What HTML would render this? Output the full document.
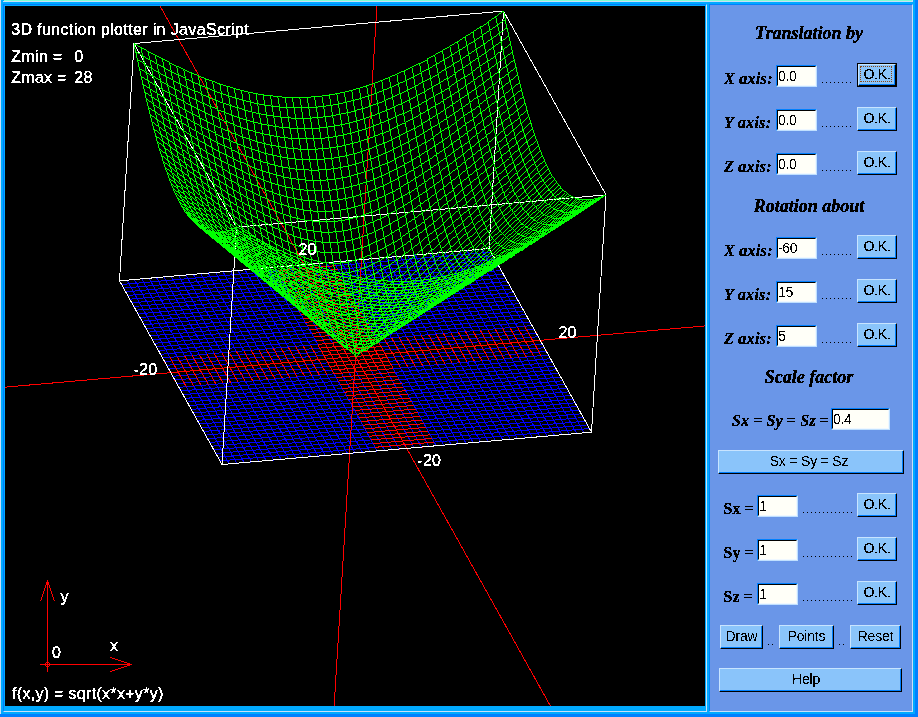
<!DOCTYPE html>
<html><head><meta charset="utf-8">
<style>
*{margin:0;padding:0;box-sizing:border-box}
html,body{width:918px;height:717px;overflow:hidden;background:#00aaff;position:relative}
.a{position:absolute}
.t{position:absolute;white-space:nowrap;line-height:1}
.sans{font-family:"Liberation Sans",sans-serif}
.serif{font-family:"Liberation Serif",serif}
.cv{left:5px;top:6px;width:700px;height:700px;background:#000;overflow:hidden}
.cv svg{position:absolute;left:0;top:0}
.w{color:#fff;font-size:16px;letter-spacing:0.3px;filter:url(#thr);-webkit-text-stroke:0.25px #fff}
.hd{filter:url(#thr);-webkit-text-stroke:0.35px #000;font:bold italic 18px "Liberation Serif",serif;color:#000;left:710px;width:202px;text-align:center}
.lb{filter:url(#thr);-webkit-text-stroke:0.3px #000;font:bold italic 16px "Liberation Serif",serif;color:#000;letter-spacing:0.3px}
.lb2{filter:url(#thr);-webkit-text-stroke:0.3px #000;font:bold 16px "Liberation Serif",serif;color:#000}
.dots{font:16px "Liberation Serif",serif;color:#000}
.inp{position:absolute;height:22px;background:#fffff8;border-top:1px solid #0080ff;border-left:1px solid #0080ff;border-right:1px solid #c0e0ff;border-bottom:1px solid #c0e0ff}
.inp:before{content:"";position:absolute;left:0;top:0;right:0;bottom:0;border-top:1px solid #000;border-left:1px solid #000;border-right:1px solid #f0f8ff;border-bottom:1px solid #f0f8ff}
.inp span{filter:url(#thr);position:absolute;left:1px;top:3px;font:14px "Liberation Sans",sans-serif;letter-spacing:-0.4px;color:#000;line-height:14px}
.btn{position:absolute;height:24px;background:#8ac4fa;border-top:1px solid #c8e4ff;border-left:1px solid #c8e4ff;border-right:1px solid #000;border-bottom:1px solid #000;font:14px "Liberation Sans",sans-serif;letter-spacing:-0.2px;color:#000;text-align:center;line-height:21px}
.btn span{filter:url(#thr);display:inline-block}
.btn:before{content:"";position:absolute;left:0;top:0;right:0;bottom:0;border-right:1px solid #0080ff;border-bottom:1px solid #0080ff}
</style></head><body>
<svg width="0" height="0" style="position:absolute"><filter id="thr" x="0" y="0" width="100%" height="100%"><feComponentTransfer><feFuncA type="discrete" tableValues="0 0 1 1"/></feComponentTransfer></filter><filter id="thr2" x="0" y="0" width="100%" height="100%"><feComponentTransfer><feFuncA type="discrete" tableValues="0 0 0 1"/></feComponentTransfer></filter></svg>
<!-- outer frame -->
<div class="a" style="left:0;top:0;width:1px;height:714px;background:#c8e0f8"></div>
<div class="a" style="left:0;top:714px;width:918px;height:3px;background:#0080ff"></div>
<div class="a" style="left:915px;top:0;width:3px;height:717px;background:#0080ff"></div>
<div class="a" style="left:4px;top:0;width:908px;height:1px;background:#7fffd4"></div>
<div class="a" style="left:3px;top:1px;width:910px;height:1px;background:#c8e0f8"></div>
<div class="a" style="left:912px;top:0;width:1px;height:2px;background:#c8e0f8"></div>
<div class="a" style="left:3px;top:4px;width:704px;height:708px;border-top:1px solid #0080ff;border-left:1px solid #0080ff;border-right:1px solid #c8e0f8;border-bottom:1px solid #c8e0f8"></div>
<div class="a" style="left:709px;top:4px;width:204px;height:708px;background:#6a96e8;border-top:1px solid #0080ff;border-left:1px solid #0080ff;border-right:1px solid #c8e0f8;border-bottom:1px solid #c8e0f8"></div>
<div class="a cv"><svg width="700" height="700" viewBox="0 0 700 700" fill="none" stroke-width="1" shape-rendering="crispEdges"><path stroke="#0000ff" stroke-width="1.000" d="M217.0,458.5L173.9,381.4M157.5,352.0L114.5,274.8M217.0,458.5L372.2,445.0M431.3,439.8L586.5,426.2M224.4,457.9L181.3,380.7M164.9,351.3L121.9,274.1M214.9,454.9L370.1,441.3M429.2,436.1L584.4,422.5M231.8,457.3L188.7,380.1M172.3,350.7L129.3,273.5M212.9,451.2L368.1,437.6M427.2,432.4L582.4,418.9M239.2,456.6L196.1,379.4M179.7,350.0L136.7,272.8M210.8,447.5L366.0,433.9M425.2,428.8L580.3,415.2M246.5,456.0L203.5,378.8M187.1,349.4L144.1,272.2M208.8,443.8L364.0,430.3M423.1,425.1L578.3,411.5M253.9,455.3L210.9,378.1M194.5,348.7L151.5,271.5M206.7,440.2L361.9,426.6M421.1,421.4L576.2,407.8M261.3,454.7L218.3,377.5M201.9,348.1L158.8,270.9M204.7,436.5L359.9,422.9M419.0,417.7L574.2,404.2M268.7,454.0L225.7,376.8M209.3,347.4L166.2,270.3M202.6,432.8L357.8,419.2M417.0,414.1L572.1,400.5M276.1,453.4L233.1,376.2M216.7,346.8L173.6,269.6M200.6,429.1L355.8,415.6M414.9,410.4L570.1,396.8M283.5,452.7L240.5,375.5M224.1,346.1L181.0,269.0M198.5,425.5L353.7,411.9M412.9,406.7L568.0,393.1M290.9,452.1L247.8,374.9M231.5,345.5L188.4,268.3M196.5,421.8L351.7,408.2M410.8,403.0L566.0,389.5M298.3,451.4L255.2,374.3M238.8,344.9L195.8,267.7M194.4,418.1L349.6,404.5M408.8,399.4L563.9,385.8M305.7,450.8L262.6,373.6M246.2,344.2L203.2,267.0M192.4,414.4L347.6,400.9M406.7,395.7L561.9,382.1M313.1,450.1L270.0,373.0M253.6,343.6L210.6,266.4M190.3,410.8L345.5,397.2M404.7,392.0L559.8,378.4M320.4,449.5L277.4,372.3M261.0,342.9L218.0,265.7M188.3,407.1L343.5,393.5M402.6,388.3L557.8,374.8M327.8,448.8L284.8,371.7M268.4,342.3L225.4,265.1M186.2,403.4L341.4,389.8M400.6,384.7L555.7,371.1M335.2,448.2L292.2,371.0M275.8,341.6L232.8,264.4M184.2,399.7L339.4,386.2M398.5,381.0L553.7,367.4M342.6,447.6L299.6,370.4M283.2,341.0L240.1,263.8M182.1,396.1L337.3,382.5M396.5,377.3L551.6,363.7M350.0,446.9L307.0,369.7M290.6,340.3L247.5,263.1M180.1,392.4L335.3,378.8M394.4,373.6L549.6,360.1M357.4,446.3L314.4,369.1M298.0,339.7L254.9,262.5M178.0,388.7L333.2,375.1M392.4,370.0L547.5,356.4M364.8,445.6L321.7,368.4M305.4,339.0L262.3,261.8M176.0,385.0L331.2,371.5M390.3,366.3L545.5,352.7M372.2,445.0L329.1,367.8M312.7,338.4L269.7,261.2M173.9,381.4L329.1,367.8M388.3,362.6L543.5,349.0M379.6,444.3L336.5,367.1M320.1,337.7L277.1,260.6M171.9,377.7L327.1,364.1M386.2,358.9L541.4,345.4M387.0,443.7L343.9,366.5M327.5,337.1L284.5,259.9M169.8,374.0L325.0,360.4M384.2,355.3L539.4,341.7M394.3,443.0L351.3,365.8M334.9,336.4L291.9,259.3M167.8,370.3L323.0,356.8M382.1,351.6L537.3,338.0M401.7,442.4L358.7,365.2M342.3,335.8L299.3,258.6M165.7,366.7L320.9,353.1M380.1,347.9L535.3,334.3M409.1,441.7L366.1,364.6M349.7,335.2L306.7,258.0M163.7,363.0L318.9,349.4M378.0,344.2L533.2,330.7M416.5,441.1L373.5,363.9M357.1,334.5L314.0,257.3M161.6,359.3L316.8,345.7M376.0,340.6L531.2,327.0M423.9,440.4L380.9,363.3M364.5,333.9L321.4,256.7M159.6,355.6L314.8,342.1M373.9,336.9L529.1,323.3M431.3,439.8L388.3,362.6M371.9,333.2L328.8,256.0M157.5,352.0L312.7,338.4M371.9,333.2L527.1,319.6M438.7,439.2L395.6,362.0M379.3,332.6L336.2,255.4M155.5,348.3L310.7,334.7M369.8,329.5L525.0,316.0M446.1,438.5L403.0,361.3M386.6,331.9L343.6,254.7M153.5,344.6L308.6,331.0M367.8,325.9L523.0,312.3M453.5,437.9L410.4,360.7M394.0,331.3L351.0,254.1M151.4,340.9L306.6,327.4M365.7,322.2L520.9,308.6M460.9,437.2L417.8,360.0M401.4,330.6L358.4,253.4M149.4,337.3L304.5,323.7M363.7,318.5L518.9,304.9M468.2,436.6L425.2,359.4M408.8,330.0L365.8,252.8M147.3,333.6L302.5,320.0M361.6,314.8L516.8,301.3M475.6,435.9L432.6,358.7M416.2,329.3L373.2,252.2M145.3,329.9L300.4,316.3M359.6,311.2L514.8,297.6M483.0,435.3L440.0,358.1M423.6,328.7L380.6,251.5M143.2,326.2L298.4,312.7M357.5,307.5L512.7,293.9M490.4,434.6L447.4,357.4M431.0,328.0L387.9,250.9M141.2,322.6L296.3,309.0M355.5,303.8L510.7,290.2M497.8,434.0L454.8,356.8M438.4,327.4L395.3,250.2M139.1,318.9L294.3,305.3M353.4,300.1L508.6,286.6M505.2,433.3L462.2,356.1M445.8,326.7L402.7,249.6M137.1,315.2L292.2,301.6M351.4,296.5L506.6,282.9M512.6,432.7L469.5,355.5M453.2,326.1L410.1,248.9M135.0,311.5L290.2,298.0M349.3,292.8L504.5,279.2M520.0,432.0L476.9,354.9M460.5,325.5L417.5,248.3M133.0,307.9L288.1,294.3M347.3,289.1L502.5,275.5M527.4,431.4L484.3,354.2M467.9,324.8L424.9,247.6M130.9,304.2L286.1,290.6M345.2,285.4L500.4,271.9M534.8,430.7L491.7,353.6M475.3,324.2L432.3,247.0M128.9,300.5L284.0,286.9M343.2,281.8L498.4,268.2M542.2,430.1L499.1,352.9M482.7,323.5L439.7,246.3M126.8,296.8L282.0,283.3M341.1,278.1L496.3,264.5M549.5,429.5L506.5,352.3M490.1,322.9L447.1,245.7M124.8,293.2L279.9,279.6M339.1,274.4L494.3,260.8M556.9,428.8L513.9,351.6M497.5,322.2L454.5,245.0M122.7,289.5L277.9,275.9M337.0,270.7L492.2,257.2M564.3,428.2L521.3,351.0M504.9,321.6L461.8,244.4M120.7,285.8L275.8,272.2M335.0,267.1L490.2,253.5M571.7,427.5L528.7,350.3M512.3,320.9L469.2,243.7M118.6,282.1L273.8,268.6M332.9,263.4L488.1,249.8M579.1,426.9L536.1,349.7M519.7,320.3L476.6,243.1M116.6,278.5L271.8,264.9M330.9,259.7L486.1,246.1M586.5,426.2L543.5,349.0M527.1,319.6L484.0,242.5M114.5,274.8L269.7,261.2M328.8,256.0L484.0,242.5"/><path stroke="#ff0000" stroke-width="1.000" d="M173.9,381.4L157.5,352.0M372.2,445.0L431.3,439.8M181.3,380.7L164.9,351.3M370.1,441.3L429.2,436.1M188.7,380.1L172.3,350.7M368.1,437.6L427.2,432.4M196.1,379.4L179.7,350.0M366.0,433.9L425.2,428.8M203.5,378.8L187.1,349.4M364.0,430.3L423.1,425.1M210.9,378.1L194.5,348.7M361.9,426.6L421.1,421.4M218.3,377.5L201.9,348.1M359.9,422.9L419.0,417.7M225.7,376.8L209.3,347.4M357.8,419.2L417.0,414.1M233.1,376.2L216.7,346.8M355.8,415.6L414.9,410.4M240.5,375.5L224.1,346.1M353.7,411.9L412.9,406.7M247.8,374.9L231.5,345.5M351.7,408.2L410.8,403.0M255.2,374.3L238.8,344.9M349.6,404.5L408.8,399.4M262.6,373.6L246.2,344.2M347.6,400.9L406.7,395.7M270.0,373.0L253.6,343.6M345.5,397.2L404.7,392.0M277.4,372.3L261.0,342.9M343.5,393.5L402.6,388.3M284.8,371.7L268.4,342.3M341.4,389.8L400.6,384.7M292.2,371.0L275.8,341.6M339.4,386.2L398.5,381.0M299.6,370.4L283.2,341.0M337.3,382.5L396.5,377.3M307.0,369.7L290.6,340.3M335.3,378.8L394.4,373.6M314.4,369.1L298.0,339.7M333.2,375.1L392.4,370.0M321.7,368.4L305.4,339.0M331.2,371.5L390.3,366.3M329.1,367.8L312.7,338.4M329.1,367.8L388.3,362.6M336.5,367.1L320.1,337.7M327.1,364.1L386.2,358.9M343.9,366.5L327.5,337.1M325.0,360.4L384.2,355.3M351.3,365.8L334.9,336.4M323.0,356.8L382.1,351.6M358.7,365.2L342.3,335.8M320.9,353.1L380.1,347.9M366.1,364.6L349.7,335.2M318.9,349.4L378.0,344.2M373.5,363.9L357.1,334.5M316.8,345.7L376.0,340.6M380.9,363.3L364.5,333.9M314.8,342.1L373.9,336.9M388.3,362.6L371.9,333.2M312.7,338.4L371.9,333.2M395.6,362.0L379.3,332.6M310.7,334.7L369.8,329.5M403.0,361.3L386.6,331.9M308.6,331.0L367.8,325.9M410.4,360.7L394.0,331.3M306.6,327.4L365.7,322.2M417.8,360.0L401.4,330.6M304.5,323.7L363.7,318.5M425.2,359.4L408.8,330.0M302.5,320.0L361.6,314.8M432.6,358.7L416.2,329.3M300.4,316.3L359.6,311.2M440.0,358.1L423.6,328.7M298.4,312.7L357.5,307.5M447.4,357.4L431.0,328.0M296.3,309.0L355.5,303.8M454.8,356.8L438.4,327.4M294.3,305.3L353.4,300.1M462.2,356.1L445.8,326.7M292.2,301.6L351.4,296.5M469.5,355.5L453.2,326.1M290.2,298.0L349.3,292.8M476.9,354.9L460.5,325.5M288.1,294.3L347.3,289.1M484.3,354.2L467.9,324.8M286.1,290.6L345.2,285.4M491.7,353.6L475.3,324.2M284.0,286.9L343.2,281.8M499.1,352.9L482.7,323.5M282.0,283.3L341.1,278.1M506.5,352.3L490.1,322.9M279.9,279.6L339.1,274.4M513.9,351.6L497.5,322.2M277.9,275.9L337.0,270.7M521.3,351.0L504.9,321.6M275.8,272.2L335.0,267.1M528.7,350.3L512.3,320.9M273.8,268.6L332.9,263.4M536.1,349.7L519.7,320.3M271.8,264.9L330.9,259.7M543.5,349.0L527.1,319.6M269.7,261.2L328.8,256.0"/><path stroke="#ff0000" stroke-width="1.000" d="M-1497.0,512.1L2198.0,188.9M862.9,1269.3L-161.9,-568.3M247.9,2028.6L453.1,-1327.6"/><path stroke="#ffffff" stroke-width="1.000" d="M114.5,274.8L484.0,242.5M484.0,242.5L586.5,426.2M586.5,426.2L217.0,458.5M217.0,458.5L114.5,274.8M129.0,37.5L498.5,5.1M498.5,5.1L601.0,188.9M601.0,188.9L231.5,221.2M231.5,221.2L129.0,37.5M114.5,274.8L129.0,37.5M484.0,242.5L498.5,5.1M586.5,426.2L601.0,188.9M217.0,458.5L231.5,221.2"/><path stroke="#00ff00" stroke-width="0.999" d="M231.5,221.2L229.2,222.3L226.8,223.2L224.5,224.0L222.2,224.7L219.9,225.3L217.6,225.7L215.3,226.0L213.0,226.2L210.7,226.2L208.5,226.1L206.2,225.8L204.0,225.3L201.7,224.6L199.5,223.8L197.3,222.7L195.1,221.4L192.9,219.9L190.7,218.1L188.6,216.1L186.5,213.9L184.3,211.4L182.2,208.7L180.1,205.7L178.1,202.4L176.0,198.9L174.0,195.0L171.9,191.0L169.9,186.6L167.9,182.0L166.0,177.2L164.0,172.0L162.1,166.7L160.1,161.1L158.2,155.2L156.3,149.2L154.4,142.9L152.5,136.4L150.7,129.7L148.8,122.9L147.0,115.8L145.1,108.6L143.3,101.3L141.5,93.7L139.7,86.1L137.9,78.3L136.1,70.3L134.3,62.3L132.5,54.1L130.8,45.8L129.0,37.5M231.5,221.2L238.6,225.3L245.7,229.2L252.8,233.1L259.9,236.8L267.1,240.4L274.2,243.9L281.4,247.2L288.5,250.4L295.7,253.5L302.9,256.4L310.0,259.1L317.2,261.6L324.4,264.0L331.7,266.2L338.9,268.1L346.1,269.9L353.4,271.4L360.7,272.6L367.9,273.7L375.3,274.5L382.6,275.0L389.9,275.3L397.3,275.3L404.6,275.1L412.0,274.6L419.4,273.8L426.8,272.7L434.2,271.4L441.7,269.9L449.2,268.0L456.6,265.9L464.1,263.6L471.6,261.0L479.2,258.2L486.7,255.2L494.2,251.9L501.8,248.5L509.4,244.8L517.0,241.0L524.6,237.0L532.2,232.8L539.8,228.5L547.4,224.0L555.0,219.3L562.7,214.6L570.3,209.6L578.0,204.6L585.7,199.5L593.3,194.2L601.0,188.9M238.6,225.3L236.3,226.4L233.9,227.4L231.6,228.3L229.3,229.1L227.0,229.8L224.6,230.4L222.3,230.8L220.1,231.1L217.8,231.2L215.5,231.2L213.2,231.0L211.0,230.6L208.7,230.0L206.5,229.2L204.3,228.2L202.1,227.0L199.9,225.6L197.7,223.9L195.6,222.0L193.4,219.8L191.3,217.4L189.2,214.7L187.1,211.7L185.0,208.5L183.0,204.9L180.9,201.1L178.9,197.0L176.9,192.6L174.9,188.0L173.0,183.1L171.0,177.9L169.1,172.5L167.1,166.8L165.2,160.9L163.3,154.7L161.4,148.4L159.6,141.8L157.7,135.0L155.8,128.1L154.0,120.9L152.2,113.6L150.4,106.1L148.6,98.5L146.8,90.7L145.0,82.8L143.2,74.8L141.4,66.6L139.6,58.4L137.9,50.0L136.1,41.5M229.2,222.3L236.3,226.4L243.4,230.4L250.5,234.4L257.6,238.2L264.7,241.9L271.8,245.5L279.0,249.0L286.1,252.3L293.3,255.4L300.5,258.4L307.6,261.3L314.8,263.9L322.0,266.4L329.2,268.6L336.5,270.7L343.7,272.5L351.0,274.1L358.2,275.4L365.5,276.5L372.8,277.4L380.1,278.0L387.4,278.3L394.8,278.3L402.2,278.1L409.5,277.6L416.9,276.8L424.4,275.8L431.8,274.4L439.2,272.8L446.7,270.9L454.2,268.8L461.7,266.4L469.2,263.7L476.7,260.8L484.3,257.7L491.8,254.4L499.4,250.8L507.0,247.1L514.6,243.2L522.2,239.0L529.8,234.7L537.4,230.3L545.0,225.7L552.7,221.0L560.3,216.1L568.0,211.1L575.6,205.9L583.3,200.7L591.0,195.4L598.7,189.9M245.7,229.2L243.4,230.4L241.0,231.6L238.7,232.6L236.4,233.5L234.0,234.3L231.7,235.0L229.4,235.5L227.1,235.9L224.8,236.1L222.5,236.2L220.3,236.1L218.0,235.8L215.8,235.3L213.5,234.7L211.3,233.8L209.1,232.7L206.9,231.3L204.7,229.7L202.6,227.9L200.4,225.8L198.3,223.4L196.2,220.7L194.1,217.8L192.0,214.5L190.0,211.0L187.9,207.2L185.9,203.1L183.9,198.7L181.9,194.0L179.9,189.0L178.0,183.8L176.0,178.3L174.1,172.5L172.2,166.5L170.3,160.3L168.4,153.8L166.6,147.1L164.7,140.3L162.9,133.2L161.1,125.9L159.2,118.5L157.4,110.9L155.6,103.2L153.8,95.3L152.0,87.3L150.3,79.1L148.5,70.9L146.7,62.5L145.0,54.0L143.2,45.5M226.8,223.2L233.9,227.4L241.0,231.6L248.1,235.6L255.2,239.6L262.3,243.4L269.5,247.1L276.6,250.6L283.7,254.0L290.9,257.3L298.1,260.4L305.2,263.3L312.4,266.1L319.6,268.7L326.8,271.0L334.0,273.2L341.3,275.1L348.5,276.7L355.8,278.2L363.1,279.4L370.3,280.3L377.7,280.9L385.0,281.3L392.3,281.4L399.7,281.1L407.1,280.6L414.5,279.9L421.9,278.8L429.3,277.4L436.8,275.7L444.2,273.8L451.7,271.6L459.2,269.1L466.8,266.4L474.3,263.4L481.8,260.2L489.4,256.8L497.0,253.1L504.6,249.3L512.2,245.2L519.8,241.0L527.4,236.6L535.0,232.1L542.6,227.4L550.3,222.5L558.0,217.5L565.6,212.4L573.3,207.2L581.0,201.8L588.6,196.4L596.3,190.8M252.8,233.1L250.5,234.4L248.1,235.6L245.8,236.7L243.4,237.8L241.1,238.7L238.8,239.4L236.5,240.1L234.2,240.6L231.9,240.9L229.6,241.1L227.3,241.1L225.0,241.0L222.8,240.6L220.6,240.1L218.3,239.3L216.1,238.3L213.9,237.0L211.7,235.5L209.6,233.7L207.4,231.7L205.3,229.3L203.2,226.7L201.1,223.8L199.0,220.6L196.9,217.1L194.9,213.2L192.9,209.1L190.9,204.7L188.9,199.9L186.9,194.9L185.0,189.6L183.0,184.0L181.1,178.2L179.2,172.1L177.3,165.8L175.5,159.2L173.6,152.4L171.8,145.4L169.9,138.2L168.1,130.9L166.3,123.3L164.5,115.6L162.7,107.8L160.9,99.8L159.1,91.6L157.4,83.4L155.6,75.0L153.8,66.6L152.1,58.0L150.3,49.3M224.5,224.0L231.6,228.3L238.7,232.6L245.8,236.7L252.9,240.8L260.0,244.7L267.1,248.5L274.2,252.2L281.4,255.7L288.5,259.1L295.7,262.3L302.8,265.4L310.0,268.2L317.2,270.9L324.4,273.4L331.6,275.6L338.8,277.6L346.1,279.4L353.3,280.9L360.6,282.2L367.9,283.2L375.2,283.9L382.5,284.3L389.9,284.4L397.2,284.2L404.6,283.7L412.0,282.9L419.4,281.8L426.9,280.4L434.3,278.7L441.8,276.7L449.3,274.4L456.8,271.9L464.3,269.1L471.9,266.0L479.4,262.7L487.0,259.1L494.6,255.4L502.1,251.4L509.8,247.3L517.4,242.9L525.0,238.4L532.6,233.7L540.3,228.9L547.9,224.0L555.6,218.9L563.3,213.6L570.9,208.3L578.6,202.8L586.3,197.3L594.0,191.7M259.9,236.8L257.6,238.2L255.2,239.6L252.9,240.8L250.5,241.9L248.2,242.9L245.9,243.8L243.6,244.6L241.2,245.2L238.9,245.7L236.6,246.0L234.4,246.1L232.1,246.1L229.8,245.8L227.6,245.4L225.3,244.7L223.1,243.8L220.9,242.6L218.7,241.2L216.6,239.5L214.4,237.6L212.3,235.3L210.2,232.7L208.1,229.8L206.0,226.6L203.9,223.1L201.9,219.3L199.9,215.1L197.9,210.7L195.9,205.9L193.9,200.8L192.0,195.4L190.0,189.8L188.1,183.8L186.2,177.6L184.4,171.2L182.5,164.5L180.6,157.6L178.8,150.5L177.0,143.2L175.2,135.7L173.4,128.1L171.6,120.2L169.8,112.3L168.0,104.2L166.2,95.9L164.5,87.5L162.7,79.1L161.0,70.5L159.2,61.8L157.5,53.0M222.2,224.7L229.3,229.1L236.4,233.5L243.4,237.8L250.5,241.9L257.6,246.0L264.8,249.9L271.9,253.7L279.0,257.3L286.1,260.8L293.3,264.2L300.4,267.3L307.6,270.3L314.8,273.1L322.0,275.7L329.2,278.0L336.4,280.1L343.6,282.0L350.9,283.6L358.2,285.0L365.4,286.0L372.8,286.8L380.1,287.2L387.4,287.4L394.8,287.2L402.2,286.7L409.6,285.9L417.0,284.8L424.4,283.4L431.9,281.6L439.4,279.5L446.8,277.2L454.4,274.6L461.9,271.7L469.4,268.5L477.0,265.1L484.6,261.4L492.1,257.6L499.7,253.5L507.4,249.2L515.0,244.8L522.6,240.1L530.3,235.3L537.9,230.4L545.6,225.3L553.2,220.1L560.9,214.8L568.6,209.3L576.3,203.8L584.0,198.1L591.7,192.4M267.1,240.4L264.7,241.9L262.3,243.4L260.0,244.7L257.6,246.0L255.3,247.1L253.0,248.1L250.6,249.0L248.3,249.7L246.0,250.3L243.7,250.8L241.4,251.0L239.1,251.1L236.9,251.0L234.6,250.6L232.4,250.1L230.1,249.3L227.9,248.2L225.7,246.9L223.6,245.3L221.4,243.4L219.3,241.2L217.1,238.7L215.0,235.9L213.0,232.7L210.9,229.2L208.9,225.3L206.8,221.2L204.8,216.7L202.9,211.8L200.9,206.7L199.0,201.2L197.0,195.5L195.1,189.4L193.3,183.1L191.4,176.6L189.5,169.8L187.7,162.8L185.8,155.5L184.0,148.1L182.2,140.5L180.4,132.7L178.6,124.8L176.8,116.7L175.1,108.4L173.3,100.1L171.6,91.6L169.8,83.0L168.1,74.3L166.3,65.5L164.6,56.6M219.9,225.3L227.0,229.8L234.0,234.3L241.1,238.7L248.2,242.9L255.3,247.1L262.4,251.1L269.5,255.0L276.6,258.8L283.8,262.4L290.9,265.9L298.0,269.2L305.2,272.3L312.4,275.2L319.6,277.9L326.8,280.4L334.0,282.6L341.2,284.6L348.5,286.3L355.7,287.7L363.0,288.9L370.3,289.7L377.6,290.2L385.0,290.4L392.3,290.2L399.7,289.8L407.1,288.9L414.5,287.8L422.0,286.3L429.4,284.5L436.9,282.4L444.4,280.0L451.9,277.2L459.5,274.2L467.0,271.0L474.6,267.4L482.1,263.7L489.7,259.7L497.4,255.5L505.0,251.1L512.6,246.5L520.2,241.7L527.9,236.8L535.6,231.8L543.2,226.6L550.9,221.2L558.6,215.8L566.3,210.2L574.0,204.5L581.7,198.8L589.4,192.9M274.2,243.9L271.8,245.5L269.5,247.1L267.1,248.5L264.8,249.9L262.4,251.1L260.1,252.3L257.7,253.3L255.4,254.1L253.1,254.9L250.8,255.4L248.5,255.8L246.2,256.0L243.9,256.0L241.6,255.8L239.4,255.4L237.2,254.7L234.9,253.8L232.7,252.6L230.6,251.1L228.4,249.3L226.3,247.2L224.1,244.7L222.0,241.9L219.9,238.7L217.9,235.2L215.8,231.4L213.8,227.2L211.8,222.6L209.9,217.8L207.9,212.5L206.0,207.0L204.1,201.1L202.2,195.0L200.3,188.6L198.4,181.9L196.6,175.0L194.7,167.8L192.9,160.5L191.1,152.9L189.3,145.2L187.5,137.2L185.7,129.2L183.9,120.9L182.2,112.6L180.4,104.1L178.7,95.5L176.9,86.8L175.2,78.0L173.5,69.1L171.7,60.1M217.6,225.7L224.6,230.4L231.7,235.0L238.8,239.4L245.9,243.8L253.0,248.1L260.1,252.3L267.2,256.3L274.3,260.2L281.4,263.9L288.5,267.5L295.7,271.0L302.8,274.2L310.0,277.2L317.2,280.1L324.4,282.7L331.6,285.0L338.8,287.1L346.0,288.9L353.3,290.5L360.6,291.7L367.8,292.6L375.2,293.2L382.5,293.4L389.9,293.3L397.2,292.8L404.6,292.0L412.1,290.8L419.5,289.3L427.0,287.4L434.5,285.2L442.0,282.7L449.5,279.9L457.0,276.8L464.6,273.4L472.2,269.7L479.7,265.9L487.3,261.7L495.0,257.4L502.6,252.9L510.2,248.1L517.9,243.3L525.5,238.2L533.2,233.0L540.9,227.7L548.6,222.2L556.3,216.7L564.0,211.0L571.7,205.2L579.4,199.3L587.1,193.4M281.4,247.2L279.0,249.0L276.6,250.6L274.2,252.2L271.9,253.7L269.5,255.0L267.2,256.3L264.8,257.4L262.5,258.4L260.2,259.3L257.8,260.0L255.5,260.5L253.2,260.9L251.0,261.0L248.7,261.0L246.4,260.7L244.2,260.1L242.0,259.3L239.8,258.2L237.6,256.8L235.4,255.1L233.2,253.1L231.1,250.7L229.0,247.9L226.9,244.8L224.9,241.3L222.8,237.5L220.8,233.2L218.8,228.6L216.8,223.7L214.9,218.4L213.0,212.7L211.1,206.8L209.2,200.5L207.3,194.0L205.4,187.2L203.6,180.1L201.8,172.8L199.9,165.3L198.1,157.6L196.4,149.7L194.6,141.7L192.8,133.5L191.0,125.1L189.3,116.6L187.5,108.0L185.8,99.3L184.1,90.5L182.3,81.6L180.6,72.6L178.9,63.5M215.3,226.0L222.3,230.8L229.4,235.5L236.5,240.1L243.6,244.6L250.6,249.0L257.7,253.3L264.8,257.4L271.9,261.5L279.0,265.3L286.2,269.1L293.3,272.6L300.4,276.0L307.6,279.2L314.8,282.2L321.9,284.9L329.1,287.4L336.4,289.6L343.6,291.5L350.8,293.2L358.1,294.5L365.4,295.5L372.7,296.1L380.0,296.4L387.4,296.3L394.8,295.8L402.2,295.0L409.6,293.8L417.1,292.2L424.5,290.3L432.0,288.0L439.5,285.4L447.0,282.5L454.6,279.3L462.2,275.8L469.7,272.0L477.3,267.9L485.0,263.7L492.6,259.2L500.2,254.5L507.9,249.7L515.5,244.7L523.2,239.5L530.9,234.1L538.5,228.7L546.2,223.1L553.9,217.4L561.6,211.6L569.4,205.7L577.1,199.8L584.8,193.7M288.5,250.4L286.1,252.3L283.7,254.0L281.4,255.7L279.0,257.3L276.6,258.8L274.3,260.2L271.9,261.5L269.6,262.6L267.2,263.6L264.9,264.4L262.6,265.1L260.3,265.6L258.0,265.9L255.7,266.0L253.5,265.9L251.2,265.5L249.0,264.8L246.8,263.8L244.6,262.5L242.4,260.9L240.2,259.0L238.1,256.6L236.0,253.9L233.9,250.9L231.8,247.4L229.8,243.5L227.8,239.2L225.8,234.6L223.8,229.6L221.9,224.2L220.0,218.4L218.1,212.4L216.2,206.0L214.3,199.3L212.5,192.3L210.6,185.1L208.8,177.7L207.0,170.1L205.2,162.2L203.4,154.2L201.7,146.0L199.9,137.6L198.1,129.1L196.4,120.5L194.7,111.8L192.9,103.0L191.2,94.0L189.5,85.0L187.7,75.9L186.0,66.7M213.0,226.2L220.1,231.1L227.1,235.9L234.2,240.6L241.2,245.2L248.3,249.7L255.4,254.1L262.5,258.4L269.6,262.6L276.7,266.6L283.8,270.5L290.9,274.2L298.1,277.7L305.2,281.1L312.4,284.2L319.5,287.1L326.7,289.7L333.9,292.0L341.2,294.1L348.4,295.9L355.7,297.3L362.9,298.3L370.3,299.0L377.6,299.4L384.9,299.3L392.3,298.9L399.7,298.0L407.1,296.8L414.6,295.2L422.1,293.2L429.6,290.8L437.1,288.1L444.6,285.0L452.2,281.7L459.7,278.0L467.3,274.1L474.9,270.0L482.6,265.5L490.2,260.9L497.8,256.1L505.5,251.1L513.2,245.9L520.8,240.6L528.5,235.2L536.2,229.6L543.9,223.9L551.6,218.0L559.3,212.1L567.1,206.1L574.8,200.0L582.5,193.9M295.7,253.5L293.3,255.4L290.9,257.3L288.5,259.1L286.1,260.8L283.8,262.4L281.4,263.9L279.0,265.3L276.7,266.6L274.3,267.8L272.0,268.8L269.7,269.6L267.4,270.2L265.1,270.7L262.8,270.9L260.5,270.9L258.2,270.7L256.0,270.2L253.8,269.3L251.6,268.2L249.4,266.7L247.2,264.8L245.1,262.6L243.0,260.0L240.9,256.9L238.8,253.4L236.8,249.6L234.8,245.3L232.8,240.5L230.8,235.4L228.9,229.9L227.0,224.1L225.1,217.9L223.2,211.4L221.3,204.5L219.5,197.4L217.7,190.1L215.9,182.5L214.1,174.7L212.3,166.7L210.5,158.5L208.8,150.2L207.0,141.7L205.3,133.0L203.5,124.3L201.8,115.4L200.1,106.5L198.3,97.4L196.6,88.2L194.9,79.0L193.2,69.7M210.7,226.2L217.8,231.2L224.8,236.1L231.9,240.9L238.9,245.7L246.0,250.3L253.1,254.9L260.2,259.3L267.2,263.6L274.3,267.8L281.4,271.8L288.6,275.7L295.7,279.3L302.8,282.8L310.0,286.1L317.1,289.1L324.3,291.9L331.5,294.4L338.7,296.6L346.0,298.5L353.2,300.0L360.5,301.2L367.8,302.0L375.1,302.4L382.5,302.3L389.9,301.9L397.3,301.1L404.7,299.8L412.1,298.1L419.6,296.0L427.1,293.6L434.6,290.7L442.2,287.6L449.8,284.1L457.3,280.3L464.9,276.2L472.6,271.9L480.2,267.3L487.8,262.5L495.5,257.5L503.1,252.4L510.8,247.1L518.5,241.6L526.2,236.0L533.9,230.3L541.6,224.5L549.3,218.5L557.0,212.5L564.8,206.4L572.5,200.2L580.2,193.9M302.9,256.4L300.5,258.4L298.1,260.4L295.7,262.3L293.3,264.2L290.9,265.9L288.5,267.5L286.2,269.1L283.8,270.5L281.4,271.8L279.1,272.9L276.8,273.9L274.4,274.7L272.1,275.4L269.8,275.8L267.5,275.9L265.3,275.9L263.0,275.5L260.8,274.8L258.6,273.8L256.4,272.4L254.2,270.7L252.1,268.5L250.0,266.0L247.9,263.0L245.8,259.5L243.8,255.6L241.8,251.3L239.8,246.5L237.8,241.3L235.9,235.7L234.0,229.7L232.1,223.4L230.2,216.7L228.4,209.7L226.6,202.4L224.7,194.9L222.9,187.2L221.2,179.2L219.4,171.0L217.6,162.7L215.9,154.2L214.1,145.5L212.4,136.8L210.6,127.9L208.9,118.9L207.2,109.8L205.5,100.6L203.8,91.3L202.1,82.0L200.4,72.6M208.5,226.1L215.5,231.2L222.5,236.2L229.6,241.1L236.6,246.0L243.7,250.8L250.8,255.4L257.8,260.0L264.9,264.4L272.0,268.8L279.1,272.9L286.2,277.0L293.3,280.8L300.4,284.4L307.6,287.9L314.7,291.1L321.9,294.0L329.1,296.7L336.3,299.0L343.5,301.1L350.8,302.7L358.1,304.0L365.4,304.9L372.7,305.3L380.0,305.4L387.4,304.9L394.8,304.1L402.2,302.8L409.7,301.0L417.2,298.8L424.7,296.3L432.2,293.3L439.8,290.0L447.3,286.3L454.9,282.4L462.5,278.2L470.2,273.7L477.8,268.9L485.5,264.0L493.1,258.9L500.8,253.5L508.5,248.1L516.2,242.5L523.9,236.7L531.6,230.9L539.3,224.9L547.0,218.8L554.8,212.7L562.5,206.4L570.2,200.1L578.0,193.8M310.0,259.1L307.6,261.3L305.2,263.3L302.8,265.4L300.4,267.3L298.0,269.2L295.7,271.0L293.3,272.6L290.9,274.2L288.6,275.7L286.2,277.0L283.9,278.1L281.5,279.1L279.2,279.9L276.9,280.5L274.6,280.8L272.3,280.9L270.1,280.7L267.8,280.2L265.6,279.4L263.4,278.1L261.2,276.5L259.1,274.5L256.9,272.0L254.8,269.0L252.8,265.6L250.7,261.7L248.7,257.3L246.8,252.4L244.8,247.1L242.9,241.4L241.0,235.3L239.1,228.8L237.3,221.9L235.4,214.8L233.6,207.3L231.8,199.6L230.0,191.7L228.2,183.5L226.5,175.2L224.7,166.7L223.0,158.0L221.2,149.2L219.5,140.3L217.8,131.3L216.1,122.2L214.4,113.0L212.7,103.7L210.9,94.3L209.3,84.8L207.6,75.3M206.2,225.8L213.2,231.0L220.3,236.1L227.3,241.1L234.4,246.1L241.4,251.0L248.5,255.8L255.5,260.5L262.6,265.1L269.7,269.6L276.8,273.9L283.9,278.1L291.0,282.1L298.1,285.9L305.2,289.6L312.4,292.9L319.5,296.1L326.7,298.9L333.9,301.4L341.1,303.6L348.3,305.4L355.6,306.8L362.9,307.8L370.2,308.3L377.6,308.4L384.9,308.0L392.3,307.1L399.8,305.7L407.2,303.9L414.7,301.6L422.2,298.9L429.8,295.8L437.3,292.4L444.9,288.5L452.5,284.4L460.2,280.0L467.8,275.3L475.4,270.4L483.1,265.3L490.8,260.0L498.5,254.5L506.2,248.9L513.9,243.1L521.6,237.3L529.3,231.3L537.0,225.2L544.7,219.0L552.5,212.7L560.2,206.3L568.0,199.9L575.7,193.5M317.2,261.6L314.8,263.9L312.4,266.1L310.0,268.2L307.6,270.3L305.2,272.3L302.8,274.2L300.4,276.0L298.1,277.7L295.7,279.3L293.3,280.8L291.0,282.1L288.6,283.3L286.3,284.3L284.0,285.0L281.7,285.6L279.4,285.9L277.1,285.8L274.8,285.5L272.6,284.9L270.4,283.8L268.2,282.3L266.1,280.4L263.9,278.0L261.8,275.1L259.8,271.6L257.7,267.7L255.7,263.3L253.8,258.3L251.8,252.9L249.9,247.0L248.0,240.7L246.1,234.1L244.3,227.0L242.5,219.7L240.7,212.1L238.9,204.2L237.1,196.0L235.3,187.7L233.6,179.2L231.8,170.5L230.1,161.7L228.4,152.8L226.6,143.7L224.9,134.5L223.2,125.3L221.5,115.9L219.8,106.5L218.1,97.0L216.4,87.5L214.8,77.9M204.0,225.3L211.0,230.6L218.0,235.8L225.0,241.0L232.1,246.1L239.1,251.1L246.2,256.0L253.2,260.9L260.3,265.6L267.4,270.2L274.4,274.7L281.5,279.1L288.6,283.3L295.7,287.3L302.8,291.1L310.0,294.7L317.1,298.0L324.3,301.0L331.5,303.7L338.7,306.1L345.9,308.0L353.2,309.6L360.4,310.7L367.8,311.3L375.1,311.4L382.5,311.0L389.9,310.1L397.3,308.7L404.8,306.8L412.3,304.4L419.8,301.6L427.4,298.3L434.9,294.6L442.5,290.6L450.1,286.3L457.8,281.7L465.4,276.9L473.1,271.8L480.8,266.5L488.4,261.0L496.1,255.3L503.8,249.6L511.6,243.6L519.3,237.6L527.0,231.5L534.7,225.2L542.5,218.9L550.2,212.5L558.0,206.1L565.7,199.5L573.5,193.0M324.4,264.0L322.0,266.4L319.6,268.7L317.2,270.9L314.8,273.1L312.4,275.2L310.0,277.2L307.6,279.2L305.2,281.1L302.8,282.8L300.4,284.4L298.1,285.9L295.7,287.3L293.4,288.4L291.0,289.4L288.7,290.2L286.4,290.7L284.1,290.9L281.9,290.7L279.6,290.3L277.4,289.4L275.2,288.1L273.0,286.3L270.9,283.9L268.8,281.1L266.7,277.7L264.7,273.8L262.7,269.2L260.7,264.2L258.8,258.7L256.9,252.6L255.0,246.2L253.2,239.3L251.3,232.0L249.5,224.5L247.7,216.7L246.0,208.6L244.2,200.2L242.4,191.7L240.7,183.0L239.0,174.2L237.2,165.2L235.5,156.1L233.8,146.9L232.1,137.6L230.4,128.2L228.7,118.7L227.0,109.2L225.3,99.6L223.6,89.9L222.0,80.2M201.7,224.6L208.7,230.0L215.8,235.3L222.8,240.6L229.8,245.8L236.9,251.0L243.9,256.0L251.0,261.0L258.0,265.9L265.1,270.7L272.1,275.4L279.2,279.9L286.3,284.3L293.4,288.4L300.5,292.4L307.6,296.2L314.7,299.7L321.9,303.0L329.1,305.9L336.3,308.4L343.5,310.6L350.7,312.3L358.0,313.5L365.3,314.2L372.6,314.4L380.0,314.1L387.4,313.1L394.9,311.7L402.3,309.6L409.8,307.1L417.4,304.1L424.9,300.7L432.5,296.8L440.1,292.6L447.8,288.1L455.4,283.3L463.1,278.2L470.7,272.9L478.4,267.4L486.1,261.8L493.8,256.0L501.5,250.0L509.3,243.9L517.0,237.8L524.7,231.5L532.5,225.1L540.2,218.7L548.0,212.2L555.7,205.6L563.5,199.0L571.2,192.3M331.7,266.2L329.2,268.6L326.8,271.0L324.4,273.4L322.0,275.7L319.6,277.9L317.2,280.1L314.8,282.2L312.4,284.2L310.0,286.1L307.6,287.9L305.2,289.6L302.8,291.1L300.5,292.4L298.1,293.6L295.8,294.6L293.5,295.3L291.2,295.7L288.9,295.8L286.6,295.6L284.4,294.9L282.2,293.7L280.0,292.1L277.9,289.9L275.8,287.1L273.7,283.8L271.7,279.8L269.7,275.2L267.7,270.1L265.8,264.3L263.9,258.1L262.1,251.5L260.2,244.4L258.4,236.9L256.6,229.1L254.8,221.1L253.0,212.8L251.3,204.2L249.6,195.5L247.8,186.6L246.1,177.6L244.4,168.5L242.7,159.2L241.0,149.9L239.3,140.4L237.6,130.9L235.9,121.3L234.2,111.7L232.5,101.9L230.9,92.2L229.2,82.4M199.5,223.8L206.5,229.2L213.5,234.7L220.6,240.1L227.6,245.4L234.6,250.6L241.6,255.8L248.7,261.0L255.7,266.0L262.8,270.9L269.8,275.8L276.9,280.5L284.0,285.0L291.0,289.4L298.1,293.6L305.2,297.6L312.4,301.3L319.5,304.8L326.7,307.9L333.8,310.7L341.1,313.1L348.3,314.9L355.6,316.3L362.9,317.2L370.2,317.4L377.6,317.1L385.0,316.1L392.4,314.6L399.9,312.5L407.4,309.8L415.0,306.6L422.5,302.9L430.1,298.9L437.7,294.5L445.4,289.7L453.0,284.7L460.7,279.4L468.4,273.9L476.1,268.2L483.8,262.4L491.5,256.4L499.3,250.3L507.0,244.0L514.7,237.7L522.5,231.3L530.2,224.8L538.0,218.2L545.7,211.6L553.5,204.9L561.2,198.2L569.0,191.4M338.9,268.1L336.5,270.7L334.0,273.2L331.6,275.6L329.2,278.0L326.8,280.4L324.4,282.7L321.9,284.9L319.5,287.1L317.1,289.1L314.7,291.1L312.4,292.9L310.0,294.7L307.6,296.2L305.2,297.6L302.9,298.8L300.6,299.7L298.3,300.4L296.0,300.8L293.7,300.7L291.4,300.3L289.2,299.4L287.0,297.9L284.9,295.9L282.8,293.2L280.7,289.8L278.7,285.8L276.7,281.2L274.7,275.9L272.8,270.0L270.9,263.5L269.1,256.6L267.3,249.3L265.5,241.6L263.7,233.6L261.9,225.3L260.2,216.7L258.4,208.0L256.7,199.1L255.0,190.0L253.3,180.8L251.5,171.5L249.9,162.1L248.2,152.6L246.5,143.0L244.8,133.4L243.1,123.7L241.4,113.9L239.8,104.1L238.1,94.2L236.4,84.3M197.3,222.7L204.3,228.2L211.3,233.8L218.3,239.3L225.3,244.7L232.4,250.1L239.4,255.4L246.4,260.7L253.5,265.9L260.5,270.9L267.5,275.9L274.6,280.8L281.7,285.6L288.7,290.2L295.8,294.6L302.9,298.8L310.0,302.8L317.1,306.5L324.3,309.8L331.4,312.9L338.6,315.4L345.9,317.5L353.1,319.1L360.4,320.1L367.7,320.4L375.1,320.1L382.5,319.1L390.0,317.5L397.5,315.2L405.0,312.4L412.5,309.0L420.1,305.1L427.7,300.8L435.4,296.1L443.0,291.1L450.7,285.9L458.4,280.4L466.1,274.6L473.8,268.8L481.5,262.7L489.2,256.5L497.0,250.3L504.7,243.9L512.5,237.4L520.2,230.8L528.0,224.2L535.7,217.5L543.5,210.8L551.3,204.0L559.0,197.2L566.8,190.4M346.1,269.9L343.7,272.5L341.3,275.1L338.8,277.6L336.4,280.1L334.0,282.6L331.6,285.0L329.1,287.4L326.7,289.7L324.3,291.9L321.9,294.0L319.5,296.1L317.1,298.0L314.7,299.7L312.4,301.3L310.0,302.8L307.7,304.0L305.3,304.9L303.0,305.5L300.7,305.8L298.5,305.6L296.2,304.9L294.0,303.7L291.9,301.8L289.8,299.2L287.7,295.9L285.7,291.9L283.7,287.1L281.7,281.6L279.8,275.5L278.0,268.8L276.1,261.7L274.3,254.1L272.5,246.1L270.8,237.8L269.0,229.3L267.3,220.5L265.6,211.5L263.8,202.4L262.1,193.1L260.4,183.8L258.7,174.3L257.0,164.7L255.4,155.1L253.7,145.4L252.0,135.6L250.3,125.8L248.7,115.9L247.0,106.0L245.3,96.1L243.7,86.1M195.1,221.4L202.1,227.0L209.1,232.7L216.1,238.3L223.1,243.8L230.1,249.3L237.2,254.7L244.2,260.1L251.2,265.5L258.2,270.7L265.3,275.9L272.3,280.9L279.4,285.9L286.4,290.7L293.5,295.3L300.6,299.7L307.7,304.0L314.8,307.9L321.9,311.6L329.0,314.9L336.2,317.7L343.4,320.1L350.7,321.8L357.9,323.0L365.3,323.4L372.6,323.2L380.1,322.1L387.5,320.4L395.0,318.0L402.5,314.9L410.1,311.2L417.7,307.1L425.4,302.5L433.0,297.6L440.7,292.3L448.4,286.8L456.1,281.1L463.8,275.1L471.5,269.0L479.2,262.8L487.0,256.5L494.7,250.0L502.5,243.5L510.2,236.9L518.0,230.2L525.7,223.4L533.5,216.6L541.3,209.8L549.1,202.9L556.8,196.0L564.6,189.1M353.4,271.4L351.0,274.1L348.5,276.7L346.1,279.4L343.6,282.0L341.2,284.6L338.8,287.1L336.4,289.6L333.9,292.0L331.5,294.4L329.1,296.7L326.7,298.9L324.3,301.0L321.9,303.0L319.5,304.8L317.1,306.5L314.8,307.9L312.4,309.1L310.1,310.0L307.8,310.6L305.5,310.7L303.2,310.3L301.0,309.3L298.9,307.7L296.7,305.2L294.7,302.0L292.6,297.9L290.7,293.0L288.7,287.3L286.9,280.9L285.0,274.0L283.2,266.5L281.4,258.6L279.6,250.3L277.9,241.8L276.1,233.0L274.4,223.9L272.7,214.8L271.0,205.4L269.3,196.0L267.6,186.4L265.9,176.8L264.2,167.1L262.6,157.3L260.9,147.5L259.2,137.6L257.6,127.6L255.9,117.7L254.2,107.7L252.6,97.7L250.9,87.6M192.9,219.9L199.9,225.6L206.9,231.3L213.9,237.0L220.9,242.6L227.9,248.2L234.9,253.8L242.0,259.3L249.0,264.8L256.0,270.2L263.0,275.5L270.1,280.7L277.1,285.8L284.1,290.9L291.2,295.7L298.3,300.4L305.3,304.9L312.4,309.1L319.5,313.1L326.7,316.7L333.8,319.8L341.0,322.5L348.2,324.5L355.5,325.8L362.8,326.4L370.2,326.2L377.6,325.1L385.1,323.3L392.6,320.6L400.1,317.3L407.7,313.3L415.3,308.9L423.0,304.0L430.7,298.8L438.3,293.3L446.1,287.5L453.8,281.5L461.5,275.3L469.2,269.0L477.0,262.6L484.7,256.1L492.5,249.5L500.2,242.8L508.0,236.0L515.8,229.2L523.5,222.4L531.3,215.5L539.1,208.5L546.9,201.6L554.6,194.6L562.4,187.5M360.7,272.6L358.2,275.4L355.8,278.2L353.3,280.9L350.9,283.6L348.5,286.3L346.0,288.9L343.6,291.5L341.2,294.1L338.7,296.6L336.3,299.0L333.9,301.4L331.5,303.7L329.1,305.9L326.7,307.9L324.3,309.8L321.9,311.6L319.5,313.1L317.2,314.3L314.9,315.2L312.5,315.7L310.3,315.6L308.0,314.9L305.9,313.5L303.7,311.2L301.6,308.0L299.6,303.9L297.7,298.8L295.7,292.9L293.9,286.2L292.1,278.9L290.3,271.1L288.5,262.8L286.7,254.3L285.0,245.4L283.3,236.3L281.6,227.1L279.9,217.7L278.2,208.1L276.5,198.5L274.8,188.8L273.1,179.0L271.5,169.1L269.8,159.2L268.1,149.3L266.5,139.3L264.8,129.3L263.2,119.2L261.5,109.1L259.8,99.0L258.2,88.9M190.7,218.1L197.7,223.9L204.7,229.7L211.7,235.5L218.7,241.2L225.7,246.9L232.7,252.6L239.8,258.2L246.8,263.8L253.8,269.3L260.8,274.8L267.8,280.2L274.8,285.5L281.9,290.7L288.9,295.8L296.0,300.8L303.0,305.5L310.1,310.0L317.2,314.3L324.3,318.2L331.4,321.7L338.6,324.7L345.8,327.0L353.1,328.7L360.4,329.4L367.7,329.2L375.1,328.1L382.6,326.1L390.1,323.2L397.7,319.5L405.3,315.3L413.0,310.5L420.6,305.3L428.3,299.7L436.0,293.9L443.8,287.8L451.5,281.6L459.2,275.2L467.0,268.7L474.7,262.1L482.5,255.4L490.3,248.7L498.0,241.8L505.8,235.0L513.6,228.0L521.3,221.1L529.1,214.1L536.9,207.0L544.7,200.0L552.5,192.9L560.3,185.8M367.9,273.7L365.5,276.5L363.1,279.4L360.6,282.2L358.2,285.0L355.7,287.7L353.3,290.5L350.8,293.2L348.4,295.9L346.0,298.5L343.5,301.1L341.1,303.6L338.7,306.1L336.3,308.4L333.8,310.7L331.4,312.9L329.0,314.9L326.7,316.7L324.3,318.2L321.9,319.5L319.6,320.3L317.3,320.7L315.1,320.4L312.9,319.3L310.7,317.2L308.6,314.1L306.6,309.9L304.7,304.6L302.8,298.3L300.9,291.3L299.1,283.6L297.3,275.4L295.6,266.8L293.9,257.9L292.2,248.7L290.5,239.3L288.8,229.8L287.1,220.2L285.4,210.5L283.7,200.7L282.0,190.8L280.4,180.9L278.7,170.9L277.1,160.9L275.4,150.8L273.7,140.7L272.1,130.6L270.4,120.5L268.8,110.3L267.1,100.1L265.5,89.9M188.6,216.1L195.6,222.0L202.6,227.9L209.6,233.7L216.6,239.5L223.6,245.3L230.6,251.1L237.6,256.8L244.6,262.5L251.6,268.2L258.6,273.8L265.6,279.4L272.6,284.9L279.6,290.3L286.6,295.6L293.7,300.7L300.7,305.8L307.8,310.6L314.9,315.2L321.9,319.5L329.1,323.4L336.2,326.7L343.4,329.5L350.6,331.4L357.9,332.4L365.3,332.3L372.7,331.1L380.2,328.8L387.7,325.6L395.3,321.6L403.0,316.9L410.6,311.7L418.3,306.1L426.0,300.3L433.7,294.1L441.5,287.8L449.2,281.3L457.0,274.7L464.7,268.0L472.5,261.3L480.3,254.4L488.1,247.5L495.8,240.6L503.6,233.6L511.4,226.5L519.2,219.5L527.0,212.4L534.7,205.3L542.5,198.1L550.3,191.0L558.1,183.8M375.3,274.5L372.8,277.4L370.3,280.3L367.9,283.2L365.4,286.0L363.0,288.9L360.6,291.7L358.1,294.5L355.7,297.3L353.2,300.0L350.8,302.7L348.3,305.4L345.9,308.0L343.5,310.6L341.1,313.1L338.6,315.4L336.2,317.7L333.8,319.8L331.4,321.7L329.1,323.4L326.7,324.6L324.4,325.5L322.1,325.6L319.9,324.9L317.7,323.2L315.6,320.2L313.6,315.8L311.7,310.2L309.8,303.6L308.0,296.1L306.2,287.9L304.5,279.3L302.7,270.3L301.0,261.0L299.3,251.5L297.6,241.9L296.0,232.2L294.3,222.4L292.6,212.5L291.0,202.5L289.3,192.5L287.6,182.4L286.0,172.3L284.3,162.2L282.7,152.0L281.0,141.8L279.4,131.6L277.7,121.4L276.1,111.2L274.4,101.0L272.8,90.7M186.5,213.9L193.4,219.8L200.4,225.8L207.4,231.7L214.4,237.6L221.4,243.4L228.4,249.3L235.4,255.1L242.4,260.9L249.4,266.7L256.4,272.4L263.4,278.1L270.4,283.8L277.4,289.4L284.4,294.9L291.4,300.3L298.5,305.6L305.5,310.7L312.5,315.7L319.6,320.3L326.7,324.6L333.8,328.5L341.0,331.7L348.2,334.0L355.5,335.3L362.8,335.3L370.2,334.0L377.7,331.4L385.3,327.8L392.9,323.3L400.6,318.2L408.3,312.6L416.0,306.6L423.7,300.4L431.5,293.9L439.2,287.4L447.0,280.7L454.8,273.9L462.5,267.0L470.3,260.0L478.1,253.0L485.9,246.0L493.7,238.9L501.4,231.8L509.2,224.7L517.0,217.6L524.8,210.4L532.6,203.2L540.4,196.0L548.2,188.8L556.0,181.6M382.6,275.0L380.1,278.0L377.7,280.9L375.2,283.9L372.8,286.8L370.3,289.7L367.8,292.6L365.4,295.5L362.9,298.3L360.5,301.2L358.1,304.0L355.6,306.8L353.2,309.6L350.7,312.3L348.3,314.9L345.9,317.5L343.4,320.1L341.0,322.5L338.6,324.7L336.2,326.7L333.8,328.5L331.5,329.8L329.1,330.6L326.9,330.4L324.7,329.1L322.6,326.2L320.6,321.7L318.7,315.7L316.8,308.5L315.1,300.4L313.3,291.7L311.6,282.6L309.9,273.2L308.2,263.6L306.5,253.9L304.9,244.0L303.2,234.1L301.5,224.1L299.9,214.0L298.2,203.9L296.6,193.8L294.9,183.6L293.3,173.4L291.6,163.2L290.0,152.9L288.3,142.7L286.7,132.4L285.0,122.1L283.4,111.9L281.7,101.6L280.1,91.3M184.3,211.4L191.3,217.4L198.3,223.4L205.3,229.3L212.3,235.3L219.3,241.2L226.3,247.2L233.2,253.1L240.2,259.0L247.2,264.8L254.2,270.7L261.2,276.5L268.2,282.3L275.2,288.1L282.2,293.7L289.2,299.4L296.2,304.9L303.2,310.3L310.3,315.6L317.3,320.7L324.4,325.5L331.5,329.8L338.6,333.6L345.8,336.5L353.0,338.2L360.3,338.4L367.8,336.9L375.3,333.9L382.9,329.7L390.6,324.6L398.3,319.0L406.0,312.9L413.7,306.6L421.5,300.0L429.3,293.3L437.0,286.4L444.8,279.5L452.6,272.5L460.4,265.5L468.1,258.4L475.9,251.3L483.7,244.2L491.5,237.0L499.3,229.8L507.1,222.6L514.9,215.4L522.7,208.1L530.5,200.9L538.3,193.6L546.0,186.4L553.8,179.1M389.9,275.3L387.4,278.3L385.0,281.3L382.5,284.3L380.1,287.2L377.6,290.2L375.2,293.2L372.7,296.1L370.3,299.0L367.8,302.0L365.4,304.9L362.9,307.8L360.4,310.7L358.0,313.5L355.6,316.3L353.1,319.1L350.7,321.8L348.2,324.5L345.8,327.0L343.4,329.5L341.0,331.7L338.6,333.6L336.2,335.0L333.9,335.6L331.7,334.9L329.6,332.3L327.6,327.5L325.7,320.9L323.9,312.9L322.2,304.2L320.5,294.9L318.8,285.4L317.1,275.6L315.4,265.7L313.8,255.7L312.1,245.6L310.5,235.5L308.8,225.3L307.2,215.1L305.5,204.9L303.9,194.6L302.2,184.4L300.6,174.1L298.9,163.8L297.3,153.5L295.6,143.2L294.0,132.9L292.4,122.5L290.7,112.2L289.1,101.9L287.4,91.5M182.2,208.7L189.2,214.7L196.2,220.7L203.2,226.7L210.2,232.7L217.1,238.7L224.1,244.7L231.1,250.7L238.1,256.6L245.1,262.6L252.1,268.5L259.1,274.5L266.1,280.4L273.0,286.3L280.0,292.1L287.0,297.9L294.0,303.7L301.0,309.3L308.0,314.9L315.1,320.4L322.1,325.6L329.1,330.6L336.2,335.0L343.3,338.6L350.6,340.9L357.9,341.4L365.3,339.7L372.9,336.0L380.6,331.1L388.3,325.4L396.0,319.2L403.7,312.6L411.5,305.9L419.3,299.0L427.1,292.0L434.8,285.0L442.6,277.9L450.4,270.7L458.2,263.6L466.0,256.4L473.8,249.1L481.6,241.9L489.4,234.7L497.2,227.4L505.0,220.1L512.8,212.8L520.5,205.6L528.3,198.3L536.1,191.0L543.9,183.7L551.7,176.3M397.3,275.3L394.8,278.3L392.3,281.4L389.9,284.4L387.4,287.4L385.0,290.4L382.5,293.4L380.0,296.4L377.6,299.4L375.1,302.4L372.7,305.3L370.2,308.3L367.8,311.3L365.3,314.2L362.9,317.2L360.4,320.1L357.9,323.0L355.5,325.8L353.1,328.7L350.6,331.4L348.2,334.0L345.8,336.5L343.3,338.6L341.0,340.2L338.7,340.5L336.5,338.4L334.6,333.1L332.8,325.5L331.1,316.6L329.4,307.1L327.7,297.3L326.0,287.3L324.4,277.2L322.7,267.0L321.1,256.8L319.4,246.6L317.8,236.3L316.1,226.0L314.5,215.7L312.8,205.4L311.2,195.1L309.5,184.8L307.9,174.4L306.3,164.1L304.6,153.7L303.0,143.4L301.3,133.0L299.7,122.7L298.1,112.3L296.4,101.9L294.8,91.6M180.1,205.7L187.1,211.7L194.1,217.8L201.1,223.8L208.1,229.8L215.0,235.9L222.0,241.9L229.0,247.9L236.0,253.9L243.0,260.0L250.0,266.0L256.9,272.0L263.9,278.0L270.9,283.9L277.9,289.9L284.9,295.9L291.9,301.8L298.9,307.7L305.9,313.5L312.9,319.3L319.9,324.9L326.9,330.4L333.9,335.6L341.0,340.2L348.1,343.5L355.4,344.4L362.9,342.2L370.5,337.6L378.2,331.7L386.0,325.2L393.8,318.5L401.5,311.5L409.3,304.5L417.1,297.3L424.9,290.1L432.7,282.9L440.5,275.7L448.3,268.4L456.1,261.2L463.9,253.9L471.7,246.6L479.5,239.3L487.3,232.0L495.1,224.6L502.9,217.3L510.6,210.0L518.4,202.7L526.2,195.3L534.0,188.0L541.8,180.7L549.6,173.3M404.6,275.1L402.2,278.1L399.7,281.1L397.2,284.2L394.8,287.2L392.3,290.2L389.9,293.3L387.4,296.3L384.9,299.3L382.5,302.3L380.0,305.4L377.6,308.4L375.1,311.4L372.6,314.4L370.2,317.4L367.7,320.4L365.3,323.4L362.8,326.4L360.4,329.4L357.9,332.4L355.5,335.3L353.0,338.2L350.6,340.9L348.1,343.5L345.7,345.3L343.5,344.4L341.6,338.0L339.9,328.8L338.3,318.9L336.6,308.8L335.0,298.5L333.3,288.3L331.7,278.0L330.0,267.6L328.4,257.3L326.7,246.9L325.1,236.6L323.5,226.2L321.8,215.8L320.2,205.5L318.5,195.1L316.9,184.7L315.3,174.4L313.6,164.0L312.0,153.6L310.3,143.2L308.7,132.8L307.1,122.5L305.4,112.1L303.8,101.7L302.1,91.3M178.1,202.4L185.0,208.5L192.0,214.5L199.0,220.6L206.0,226.6L213.0,232.7L219.9,238.7L226.9,244.8L233.9,250.9L240.9,256.9L247.9,263.0L254.8,269.0L261.8,275.1L268.8,281.1L275.8,287.1L282.8,293.2L289.8,299.2L296.7,305.2L303.7,311.2L310.7,317.2L317.7,323.2L324.7,329.1L331.7,334.9L338.7,340.5L345.7,345.3L353.0,347.5L360.5,344.0L368.2,337.9L376.0,331.0L383.8,323.9L391.6,316.7L399.4,309.5L407.2,302.2L415.0,294.9L422.8,287.6L430.6,280.3L438.4,272.9L446.2,265.6L454.0,258.3L461.8,250.9L469.6,243.6L477.4,236.2L485.2,228.9L493.0,221.5L500.8,214.2L508.6,206.8L516.4,199.5L524.2,192.1L532.0,184.8L539.8,177.4L547.6,170.1M412.0,274.6L409.5,277.6L407.1,280.6L404.6,283.7L402.2,286.7L399.7,289.8L397.2,292.8L394.8,295.8L392.3,298.9L389.9,301.9L387.4,304.9L384.9,308.0L382.5,311.0L380.0,314.1L377.6,317.1L375.1,320.1L372.6,323.2L370.2,326.2L367.7,329.2L365.3,332.3L362.8,335.3L360.3,338.4L357.9,341.4L355.4,344.4L353.0,347.5L350.5,350.5L348.9,340.1L347.2,329.7L345.6,319.3L343.9,308.9L342.3,298.6L340.7,288.2L339.0,277.8L337.4,267.4L335.7,257.0L334.1,246.6L332.5,236.2L330.8,225.8L329.2,215.5L327.6,205.1L325.9,194.7L324.3,184.3L322.6,173.9L321.0,163.5L319.4,153.1L317.7,142.7L316.1,132.4L314.4,122.0L312.8,111.6L311.2,101.2L309.5,90.8M176.0,198.9L183.0,204.9L190.0,211.0L196.9,217.1L203.9,223.1L210.9,229.2L217.9,235.2L224.9,241.3L231.8,247.4L238.8,253.4L245.8,259.5L252.8,265.6L259.8,271.6L266.7,277.7L273.7,283.8L280.7,289.8L287.7,295.9L294.7,302.0L301.6,308.0L308.6,314.1L315.6,320.2L322.6,326.2L329.6,332.3L336.5,338.4L343.5,344.4L350.5,350.5L358.3,343.1L366.1,335.8L373.9,328.4L381.7,321.1L389.5,313.7L397.3,306.3L405.1,299.0L412.9,291.6L420.7,284.3L428.5,276.9L436.3,269.6L444.1,262.2L451.9,254.8L459.7,247.5L467.5,240.1L475.3,232.8L483.1,225.4L490.9,218.0L498.7,210.7L506.5,203.3L514.3,196.0L522.1,188.6L529.9,181.2L537.7,173.9L545.5,166.5M419.4,273.8L416.9,276.8L414.5,279.9L412.0,282.9L409.6,285.9L407.1,288.9L404.6,292.0L402.2,295.0L399.7,298.0L397.3,301.1L394.8,304.1L392.3,307.1L389.9,310.1L387.4,313.1L385.0,316.1L382.5,319.1L380.1,322.1L377.6,325.1L375.1,328.1L372.7,331.1L370.2,334.0L367.8,336.9L365.3,339.7L362.9,342.2L360.5,344.0L358.3,343.1L356.4,336.7L354.7,327.5L353.0,317.6L351.4,307.5L349.7,297.3L348.1,287.0L346.4,276.7L344.8,266.3L343.2,256.0L341.5,245.6L339.9,235.3L338.2,224.9L336.6,214.6L335.0,204.2L333.3,193.8L331.7,183.4L330.0,173.1L328.4,162.7L326.8,152.3L325.1,141.9L323.5,131.6L321.8,121.2L320.2,110.8L318.6,100.4L316.9,90.0M174.0,195.0L180.9,201.1L187.9,207.2L194.9,213.2L201.9,219.3L208.9,225.3L215.8,231.4L222.8,237.5L229.8,243.5L236.8,249.6L243.8,255.6L250.7,261.7L257.7,267.7L264.7,273.8L271.7,279.8L278.7,285.8L285.7,291.9L292.6,297.9L299.6,303.9L306.6,309.9L313.6,315.8L320.6,321.7L327.6,327.5L334.6,333.1L341.6,338.0L348.9,340.1L356.4,336.7L364.1,330.5L371.9,323.7L379.7,316.6L387.5,309.4L395.3,302.1L403.1,294.8L410.9,287.5L418.7,280.2L426.5,272.9L434.3,265.6L442.1,258.2L449.9,250.9L457.7,243.6L465.5,236.2L473.3,228.9L481.1,221.5L488.9,214.2L496.7,206.8L504.5,199.5L512.3,192.1L520.1,184.8L527.9,177.4L535.7,170.1L543.5,162.7M426.8,272.7L424.4,275.8L421.9,278.8L419.4,281.8L417.0,284.8L414.5,287.8L412.1,290.8L409.6,293.8L407.1,296.8L404.7,299.8L402.2,302.8L399.8,305.7L397.3,308.7L394.9,311.7L392.4,314.6L390.0,317.5L387.5,320.4L385.1,323.3L382.6,326.1L380.2,328.8L377.7,331.4L375.3,333.9L372.9,336.0L370.5,337.6L368.2,337.9L366.1,335.8L364.1,330.5L362.3,322.9L360.6,314.0L358.9,304.5L357.2,294.7L355.6,284.7L353.9,274.6L352.3,264.5L350.6,254.2L349.0,244.0L347.3,233.7L345.7,223.4L344.0,213.1L342.4,202.8L340.7,192.5L339.1,182.2L337.5,171.8L335.8,161.5L334.2,151.1L332.5,140.8L330.9,130.4L329.3,120.1L327.6,109.7L326.0,99.3L324.3,89.0M171.9,191.0L178.9,197.0L185.9,203.1L192.9,209.1L199.9,215.1L206.8,221.2L213.8,227.2L220.8,233.2L227.8,239.2L234.8,245.3L241.8,251.3L248.7,257.3L255.7,263.3L262.7,269.2L269.7,275.2L276.7,281.2L283.7,287.1L290.7,293.0L297.7,298.8L304.7,304.6L311.7,310.2L318.7,315.7L325.7,320.9L332.8,325.5L339.9,328.8L347.2,329.7L354.7,327.5L362.3,322.9L370.1,317.0L377.8,310.5L385.6,303.8L393.3,296.8L401.1,289.8L408.9,282.6L416.7,275.4L424.5,268.2L432.3,261.0L440.1,253.7L447.9,246.5L455.7,239.2L463.5,231.9L471.3,224.6L479.1,217.3L486.9,209.9L494.7,202.6L502.5,195.3L510.3,188.0L518.0,180.6L525.8,173.3L533.6,166.0L541.4,158.6M434.2,271.4L431.8,274.4L429.3,277.4L426.9,280.4L424.4,283.4L422.0,286.3L419.5,289.3L417.1,292.2L414.6,295.2L412.1,298.1L409.7,301.0L407.2,303.9L404.8,306.8L402.3,309.6L399.9,312.5L397.5,315.2L395.0,318.0L392.6,320.6L390.1,323.2L387.7,325.6L385.3,327.8L382.9,329.7L380.6,331.1L378.2,331.7L376.0,331.0L373.9,328.4L371.9,323.7L370.1,317.0L368.3,309.1L366.5,300.3L364.8,291.0L363.1,281.5L361.4,271.7L359.8,261.8L358.1,251.8L356.5,241.7L354.8,231.6L353.2,221.4L351.5,211.2L349.9,201.0L348.2,190.8L346.6,180.5L344.9,170.2L343.3,159.9L341.6,149.6L340.0,139.3L338.3,129.0L336.7,118.7L335.0,108.3L333.4,98.0L331.8,87.7M169.9,186.6L176.9,192.6L183.9,198.7L190.9,204.7L197.9,210.7L204.8,216.7L211.8,222.6L218.8,228.6L225.8,234.6L232.8,240.5L239.8,246.5L246.8,252.4L253.8,258.3L260.7,264.2L267.7,270.1L274.7,275.9L281.7,281.6L288.7,287.3L295.7,292.9L302.8,298.3L309.8,303.6L316.8,308.5L323.9,312.9L331.1,316.6L338.3,318.9L345.6,319.3L353.0,317.6L360.6,314.0L368.3,309.1L376.0,303.3L383.7,297.1L391.4,290.6L399.2,283.8L407.0,277.0L414.8,270.0L422.5,262.9L430.3,255.8L438.1,248.7L445.9,241.5L453.7,234.3L461.5,227.1L469.3,219.9L477.1,212.6L484.9,205.3L492.7,198.1L500.5,190.8L508.2,183.5L516.0,176.2L523.8,168.9L531.6,161.6L539.4,154.3M441.7,269.9L439.2,272.8L436.8,275.7L434.3,278.7L431.9,281.6L429.4,284.5L427.0,287.4L424.5,290.3L422.1,293.2L419.6,296.0L417.2,298.8L414.7,301.6L412.3,304.4L409.8,307.1L407.4,309.8L405.0,312.4L402.5,314.9L400.1,317.3L397.7,319.5L395.3,321.6L392.9,323.3L390.6,324.6L388.3,325.4L386.0,325.2L383.8,323.9L381.7,321.1L379.7,316.6L377.8,310.5L376.0,303.3L374.2,295.2L372.4,286.6L370.7,277.5L369.0,268.1L367.3,258.5L365.7,248.7L364.0,238.9L362.3,228.9L360.7,218.9L359.0,208.8L357.3,198.7L355.7,188.6L354.0,178.4L352.4,168.2L350.7,158.0L349.1,147.8L347.4,137.5L345.8,127.2L344.1,117.0L342.5,106.7L340.9,96.4L339.2,86.1M167.9,182.0L174.9,188.0L181.9,194.0L188.9,199.9L195.9,205.9L202.9,211.8L209.9,217.8L216.8,223.7L223.8,229.6L230.8,235.4L237.8,241.3L244.8,247.1L251.8,252.9L258.8,258.7L265.8,264.3L272.8,270.0L279.8,275.5L286.9,280.9L293.9,286.2L300.9,291.3L308.0,296.1L315.1,300.4L322.2,304.2L329.4,307.1L336.6,308.8L343.9,308.9L351.4,307.5L358.9,304.5L366.5,300.3L374.2,295.2L381.9,289.6L389.6,283.5L397.3,277.2L405.1,270.6L412.9,263.9L420.6,257.0L428.4,250.1L436.2,243.1L444.0,236.1L451.7,229.0L459.5,221.9L467.3,214.8L475.1,207.6L482.9,200.4L490.7,193.2L498.5,186.0L506.3,178.7L514.1,171.5L521.9,164.2L529.6,157.0L537.4,149.7M449.2,268.0L446.7,270.9L444.2,273.8L441.8,276.7L439.4,279.5L436.9,282.4L434.5,285.2L432.0,288.0L429.6,290.8L427.1,293.6L424.7,296.3L422.2,298.9L419.8,301.6L417.4,304.1L415.0,306.6L412.5,309.0L410.1,311.2L407.7,313.3L405.3,315.3L403.0,316.9L400.6,318.2L398.3,319.0L396.0,319.2L393.8,318.5L391.6,316.7L389.5,313.7L387.5,309.4L385.6,303.8L383.7,297.1L381.9,289.6L380.1,281.4L378.4,272.8L376.6,263.8L374.9,254.5L373.2,245.1L371.5,235.5L369.9,225.7L368.2,215.9L366.5,206.0L364.9,196.0L363.2,186.0L361.5,175.9L359.9,165.8L358.2,155.7L356.6,145.6L354.9,135.4L353.3,125.2L351.6,115.0L350.0,104.7L348.3,94.5L346.7,84.3M166.0,177.2L173.0,183.1L179.9,189.0L186.9,194.9L193.9,200.8L200.9,206.7L207.9,212.5L214.9,218.4L221.9,224.2L228.9,229.9L235.9,235.7L242.9,241.4L249.9,247.0L256.9,252.6L263.9,258.1L270.9,263.5L278.0,268.8L285.0,274.0L292.1,278.9L299.1,283.6L306.2,287.9L313.3,291.7L320.5,294.9L327.7,297.3L335.0,298.5L342.3,298.6L349.7,297.3L357.2,294.7L364.8,291.0L372.4,286.6L380.1,281.4L387.8,275.8L395.5,269.9L403.2,263.6L411.0,257.2L418.7,250.6L426.5,243.9L434.3,237.1L442.0,230.2L449.8,223.3L457.6,216.3L465.4,209.3L473.2,202.2L480.9,195.1L488.7,188.0L496.5,180.8L504.3,173.6L512.1,166.5L519.9,159.3L527.7,152.0L535.5,144.8M456.6,265.9L454.2,268.8L451.7,271.6L449.3,274.4L446.8,277.2L444.4,280.0L442.0,282.7L439.5,285.4L437.1,288.1L434.6,290.7L432.2,293.3L429.8,295.8L427.4,298.3L424.9,300.7L422.5,302.9L420.1,305.1L417.7,307.1L415.3,308.9L413.0,310.5L410.6,311.7L408.3,312.6L406.0,312.9L403.7,312.6L401.5,311.5L399.4,309.5L397.3,306.3L395.3,302.1L393.3,296.8L391.4,290.6L389.6,283.5L387.8,275.8L386.0,267.6L384.3,259.0L382.5,250.1L380.8,240.9L379.1,231.6L377.4,222.1L375.8,212.5L374.1,202.7L372.4,192.9L370.7,183.0L369.1,173.1L367.4,163.1L365.7,153.1L364.1,143.0L362.4,133.0L360.8,122.8L359.1,112.7L357.5,102.5L355.8,92.4L354.2,82.2M164.0,172.0L171.0,177.9L178.0,183.8L185.0,189.6L192.0,195.4L199.0,201.2L206.0,207.0L213.0,212.7L220.0,218.4L227.0,224.1L234.0,229.7L241.0,235.3L248.0,240.7L255.0,246.2L262.1,251.5L269.1,256.6L276.1,261.7L283.2,266.5L290.3,271.1L297.3,275.4L304.5,279.3L311.6,282.6L318.8,285.4L326.0,287.3L333.3,288.3L340.7,288.2L348.1,287.0L355.6,284.7L363.1,281.5L370.7,277.5L378.4,272.8L386.0,267.6L393.7,262.0L401.4,256.2L409.2,250.0L416.9,243.7L424.6,237.2L432.4,230.6L440.1,223.9L447.9,217.2L455.7,210.3L463.5,203.4L471.2,196.4L479.0,189.5L486.8,182.4L494.6,175.4L502.4,168.3L510.1,161.2L517.9,154.0L525.7,146.9L533.5,139.7M464.1,263.6L461.7,266.4L459.2,269.1L456.8,271.9L454.4,274.6L451.9,277.2L449.5,279.9L447.0,282.5L444.6,285.0L442.2,287.6L439.8,290.0L437.3,292.4L434.9,294.6L432.5,296.8L430.1,298.9L427.7,300.8L425.4,302.5L423.0,304.0L420.6,305.3L418.3,306.1L416.0,306.6L413.7,306.6L411.5,305.9L409.3,304.5L407.2,302.2L405.1,299.0L403.1,294.8L401.1,289.8L399.2,283.8L397.3,277.2L395.5,269.9L393.7,262.0L391.9,253.8L390.2,245.2L388.5,236.4L386.7,227.3L385.0,218.0L383.3,208.6L381.6,199.1L380.0,189.5L378.3,179.7L376.6,169.9L374.9,160.1L373.3,150.2L371.6,140.2L369.9,130.2L368.3,120.2L366.6,110.1L365.0,100.1L363.3,90.0L361.6,79.8M162.1,166.7L169.1,172.5L176.0,178.3L183.0,184.0L190.0,189.8L197.0,195.5L204.1,201.1L211.1,206.8L218.1,212.4L225.1,217.9L232.1,223.4L239.1,228.8L246.1,234.1L253.2,239.3L260.2,244.4L267.3,249.3L274.3,254.1L281.4,258.6L288.5,262.8L295.6,266.8L302.7,270.3L309.9,273.2L317.1,275.6L324.4,277.2L331.7,278.0L339.0,277.8L346.4,276.7L353.9,274.6L361.4,271.7L369.0,268.1L376.6,263.8L384.3,259.0L391.9,253.8L399.6,248.2L407.3,242.4L415.1,236.4L422.8,230.1L430.5,223.8L438.3,217.3L446.0,210.7L453.8,204.0L461.6,197.2L469.3,190.4L477.1,183.5L484.9,176.6L492.7,169.6L500.4,162.6L508.2,155.6L516.0,148.5L523.8,141.4L531.6,134.3M471.6,261.0L469.2,263.7L466.8,266.4L464.3,269.1L461.9,271.7L459.5,274.2L457.0,276.8L454.6,279.3L452.2,281.7L449.8,284.1L447.3,286.3L444.9,288.5L442.5,290.6L440.1,292.6L437.7,294.5L435.4,296.1L433.0,297.6L430.7,298.8L428.3,299.7L426.0,300.3L423.7,300.4L421.5,300.0L419.3,299.0L417.1,297.3L415.0,294.9L412.9,291.6L410.9,287.5L408.9,282.6L407.0,277.0L405.1,270.6L403.2,263.6L401.4,256.2L399.6,248.2L397.9,240.0L396.1,231.4L394.4,222.6L392.7,213.6L390.9,204.4L389.2,195.1L387.5,185.6L385.9,176.1L384.2,166.4L382.5,156.7L380.8,147.0L379.1,137.1L377.5,127.2L375.8,117.3L374.1,107.3L372.5,97.3L370.8,87.3L369.2,77.3M160.1,161.1L167.1,166.8L174.1,172.5L181.1,178.2L188.1,183.8L195.1,189.4L202.2,195.0L209.2,200.5L216.2,206.0L223.2,211.4L230.2,216.7L237.3,221.9L244.3,227.0L251.3,232.0L258.4,236.9L265.5,241.6L272.5,246.1L279.6,250.3L286.7,254.3L293.9,257.9L301.0,261.0L308.2,263.6L315.4,265.7L322.7,267.0L330.0,267.6L337.4,267.4L344.8,266.3L352.3,264.5L359.8,261.8L367.3,258.5L374.9,254.5L382.5,250.1L390.2,245.2L397.9,240.0L405.6,234.5L413.3,228.7L421.0,222.7L428.7,216.5L436.4,210.2L444.2,203.8L451.9,197.3L459.7,190.7L467.4,184.0L475.2,177.2L483.0,170.4L490.7,163.6L498.5,156.7L506.3,149.7L514.1,142.8L521.8,135.8L529.6,128.7M479.2,258.2L476.7,260.8L474.3,263.4L471.9,266.0L469.4,268.5L467.0,271.0L464.6,273.4L462.2,275.8L459.7,278.0L457.3,280.3L454.9,282.4L452.5,284.4L450.1,286.3L447.8,288.1L445.4,289.7L443.0,291.1L440.7,292.3L438.3,293.3L436.0,293.9L433.7,294.1L431.5,293.9L429.3,293.3L427.1,292.0L424.9,290.1L422.8,287.6L420.7,284.3L418.7,280.2L416.7,275.4L414.8,270.0L412.9,263.9L411.0,257.2L409.2,250.0L407.3,242.4L405.6,234.5L403.8,226.2L402.0,217.6L400.3,208.9L398.6,199.9L396.9,190.8L395.1,181.5L393.4,172.1L391.8,162.7L390.1,153.1L388.4,143.4L386.7,133.7L385.0,124.0L383.3,114.1L381.7,104.3L380.0,94.4L378.3,84.4L376.7,74.4M158.2,155.2L165.2,160.9L172.2,166.5L179.2,172.1L186.2,177.6L193.3,183.1L200.3,188.6L207.3,194.0L214.3,199.3L221.3,204.5L228.4,209.7L235.4,214.8L242.5,219.7L249.5,224.5L256.6,229.1L263.7,233.6L270.8,237.8L277.9,241.8L285.0,245.4L292.2,248.7L299.3,251.5L306.5,253.9L313.8,255.7L321.1,256.8L328.4,257.3L335.7,257.0L343.2,256.0L350.6,254.2L358.1,251.8L365.7,248.7L373.2,245.1L380.8,240.9L388.5,236.4L396.1,231.4L403.8,226.2L411.5,220.7L419.2,214.9L426.9,209.0L434.6,202.9L442.3,196.7L450.1,190.3L457.8,183.9L465.6,177.3L473.3,170.7L481.1,164.0L488.9,157.3L496.6,150.5L504.4,143.6L512.2,136.8L519.9,129.9L527.7,122.9M486.7,255.2L484.3,257.7L481.8,260.2L479.4,262.7L477.0,265.1L474.6,267.4L472.2,269.7L469.7,272.0L467.3,274.1L464.9,276.2L462.5,278.2L460.2,280.0L457.8,281.7L455.4,283.3L453.0,284.7L450.7,285.9L448.4,286.8L446.1,287.5L443.8,287.8L441.5,287.8L439.2,287.4L437.0,286.4L434.8,285.0L432.7,282.9L430.6,280.3L428.5,276.9L426.5,272.9L424.5,268.2L422.5,262.9L420.6,257.0L418.7,250.6L416.9,243.7L415.1,236.4L413.3,228.7L411.5,220.7L409.7,212.4L408.0,203.8L406.2,195.1L404.5,186.2L402.8,177.1L401.1,167.9L399.4,158.6L397.7,149.2L396.0,139.7L394.3,130.1L392.6,120.4L390.9,110.7L389.2,101.0L387.6,91.2L385.9,81.3L384.2,71.4M156.3,149.2L163.3,154.7L170.3,160.3L177.3,165.8L184.4,171.2L191.4,176.6L198.4,181.9L205.4,187.2L212.5,192.3L219.5,197.4L226.6,202.4L233.6,207.3L240.7,212.1L247.7,216.7L254.8,221.1L261.9,225.3L269.0,229.3L276.1,233.0L283.3,236.3L290.5,239.3L297.6,241.9L304.9,244.0L312.1,245.6L319.4,246.6L326.7,246.9L334.1,246.6L341.5,245.6L349.0,244.0L356.5,241.7L364.0,238.9L371.5,235.5L379.1,231.6L386.7,227.3L394.4,222.6L402.0,217.6L409.7,212.4L417.4,206.8L425.1,201.1L432.8,195.2L440.5,189.2L448.3,183.0L456.0,176.8L463.7,170.4L471.5,163.9L479.2,157.3L487.0,150.7L494.7,144.0L502.5,137.3L510.3,130.5L518.0,123.7L525.8,116.8M494.2,251.9L491.8,254.4L489.4,256.8L487.0,259.1L484.6,261.4L482.1,263.7L479.7,265.9L477.3,267.9L474.9,270.0L472.6,271.9L470.2,273.7L467.8,275.3L465.4,276.9L463.1,278.2L460.7,279.4L458.4,280.4L456.1,281.1L453.8,281.5L451.5,281.6L449.2,281.3L447.0,280.7L444.8,279.5L442.6,277.9L440.5,275.7L438.4,272.9L436.3,269.6L434.3,265.6L432.3,261.0L430.3,255.8L428.4,250.1L426.5,243.9L424.6,237.2L422.8,230.1L421.0,222.7L419.2,214.9L417.4,206.8L415.6,198.5L413.9,190.0L412.1,181.3L410.4,172.4L408.7,163.4L407.0,154.3L405.3,145.0L403.6,135.6L401.9,126.2L400.2,116.7L398.5,107.1L396.8,97.4L395.1,87.7L393.4,78.0L391.8,68.2M154.4,142.9L161.4,148.4L168.4,153.8L175.5,159.2L182.5,164.5L189.5,169.8L196.6,175.0L203.6,180.1L210.6,185.1L217.7,190.1L224.7,194.9L231.8,199.6L238.9,204.2L246.0,208.6L253.0,212.8L260.2,216.7L267.3,220.5L274.4,223.9L281.6,227.1L288.8,229.8L296.0,232.2L303.2,234.1L310.5,235.5L317.8,236.3L325.1,236.6L332.5,236.2L339.9,235.3L347.3,233.7L354.8,231.6L362.3,228.9L369.9,225.7L377.4,222.1L385.0,218.0L392.7,213.6L400.3,208.9L408.0,203.8L415.6,198.5L423.3,193.0L431.0,187.4L438.7,181.5L446.4,175.5L454.2,169.4L461.9,163.2L469.6,156.8L477.4,150.4L485.1,143.9L492.9,137.4L500.6,130.7L508.4,124.1L516.2,117.3L523.9,110.6M501.8,248.5L499.4,250.8L497.0,253.1L494.6,255.4L492.1,257.6L489.7,259.7L487.3,261.7L485.0,263.7L482.6,265.5L480.2,267.3L477.8,268.9L475.4,270.4L473.1,271.8L470.7,272.9L468.4,273.9L466.1,274.6L463.8,275.1L461.5,275.3L459.2,275.2L457.0,274.7L454.8,273.9L452.6,272.5L450.4,270.7L448.3,268.4L446.2,265.6L444.1,262.2L442.1,258.2L440.1,253.7L438.1,248.7L436.2,243.1L434.3,237.1L432.4,230.6L430.5,223.8L428.7,216.5L426.9,209.0L425.1,201.1L423.3,193.0L421.6,184.7L419.8,176.2L418.1,167.5L416.3,158.7L414.6,149.7L412.9,140.6L411.2,131.4L409.5,122.1L407.8,112.7L406.1,103.2L404.4,93.7L402.7,84.1L401.0,74.4L399.3,64.7M152.5,136.4L159.6,141.8L166.6,147.1L173.6,152.4L180.6,157.6L187.7,162.8L194.7,167.8L201.8,172.8L208.8,177.7L215.9,182.5L222.9,187.2L230.0,191.7L237.1,196.0L244.2,200.2L251.3,204.2L258.4,208.0L265.6,211.5L272.7,214.8L279.9,217.7L287.1,220.2L294.3,222.4L301.5,224.1L308.8,225.3L316.1,226.0L323.5,226.2L330.8,225.8L338.2,224.9L345.7,223.4L353.2,221.4L360.7,218.9L368.2,215.9L375.8,212.5L383.3,208.6L390.9,204.4L398.6,199.9L406.2,195.1L413.9,190.0L421.6,184.7L429.2,179.2L436.9,173.6L444.6,167.8L452.4,161.8L460.1,155.7L467.8,149.5L475.5,143.3L483.3,136.9L491.0,130.5L498.8,124.0L506.5,117.4L514.3,110.8L522.0,104.1M509.4,244.8L507.0,247.1L504.6,249.3L502.1,251.4L499.7,253.5L497.4,255.5L495.0,257.4L492.6,259.2L490.2,260.9L487.8,262.5L485.5,264.0L483.1,265.3L480.8,266.5L478.4,267.4L476.1,268.2L473.8,268.8L471.5,269.0L469.2,269.0L467.0,268.7L464.7,268.0L462.5,267.0L460.4,265.5L458.2,263.6L456.1,261.2L454.0,258.3L451.9,254.8L449.9,250.9L447.9,246.5L445.9,241.5L444.0,236.1L442.0,230.2L440.1,223.9L438.3,217.3L436.4,210.2L434.6,202.9L432.8,195.2L431.0,187.4L429.2,179.2L427.5,170.9L425.7,162.4L424.0,153.7L422.2,144.9L420.5,136.0L418.8,126.9L417.1,117.7L415.4,108.5L413.7,99.1L412.0,89.7L410.3,80.2L408.6,70.7L406.9,61.1M150.7,129.7L157.7,135.0L164.7,140.3L171.8,145.4L178.8,150.5L185.8,155.5L192.9,160.5L199.9,165.3L207.0,170.1L214.1,174.7L221.2,179.2L228.2,183.5L235.3,187.7L242.4,191.7L249.6,195.5L256.7,199.1L263.8,202.4L271.0,205.4L278.2,208.1L285.4,210.5L292.6,212.5L299.9,214.0L307.2,215.1L314.5,215.7L321.8,215.8L329.2,215.5L336.6,214.6L344.0,213.1L351.5,211.2L359.0,208.8L366.5,206.0L374.1,202.7L381.6,199.1L389.2,195.1L396.9,190.8L404.5,186.2L412.1,181.3L419.8,176.2L427.5,170.9L435.2,165.4L442.9,159.8L450.6,154.0L458.3,148.1L466.0,142.0L473.7,135.9L481.4,129.7L489.2,123.4L496.9,117.0L504.7,110.5L512.4,104.0L520.2,97.4M517.0,241.0L514.6,243.2L512.2,245.2L509.8,247.3L507.4,249.2L505.0,251.1L502.6,252.9L500.2,254.5L497.8,256.1L495.5,257.5L493.1,258.9L490.8,260.0L488.4,261.0L486.1,261.8L483.8,262.4L481.5,262.7L479.2,262.8L477.0,262.6L474.7,262.1L472.5,261.3L470.3,260.0L468.1,258.4L466.0,256.4L463.9,253.9L461.8,250.9L459.7,247.5L457.7,243.6L455.7,239.2L453.7,234.3L451.7,229.0L449.8,223.3L447.9,217.2L446.0,210.7L444.2,203.8L442.3,196.7L440.5,189.2L438.7,181.5L436.9,173.6L435.2,165.4L433.4,157.1L431.6,148.6L429.9,139.9L428.2,131.1L426.4,122.2L424.7,113.2L423.0,104.1L421.3,94.9L419.6,85.6L417.9,76.2L416.2,66.7L414.5,57.2M148.8,122.9L155.8,128.1L162.9,133.2L169.9,138.2L177.0,143.2L184.0,148.1L191.1,152.9L198.1,157.6L205.2,162.2L212.3,166.7L219.4,171.0L226.5,175.2L233.6,179.2L240.7,183.0L247.8,186.6L255.0,190.0L262.1,193.1L269.3,196.0L276.5,198.5L283.7,200.7L291.0,202.5L298.2,203.9L305.5,204.9L312.8,205.4L320.2,205.5L327.6,205.1L335.0,204.2L342.4,202.8L349.9,201.0L357.3,198.7L364.9,196.0L372.4,192.9L380.0,189.5L387.5,185.6L395.1,181.5L402.8,177.1L410.4,172.4L418.1,167.5L425.7,162.4L433.4,157.1L441.1,151.6L448.8,146.0L456.5,140.2L464.2,134.3L471.9,128.3L479.6,122.2L487.4,116.1L495.1,109.8L502.8,103.4L510.6,97.0L518.3,90.6M524.6,237.0L522.2,239.0L519.8,241.0L517.4,242.9L515.0,244.8L512.6,246.5L510.2,248.1L507.9,249.7L505.5,251.1L503.1,252.4L500.8,253.5L498.5,254.5L496.1,255.3L493.8,256.0L491.5,256.4L489.2,256.5L487.0,256.5L484.7,256.1L482.5,255.4L480.3,254.4L478.1,253.0L475.9,251.3L473.8,249.1L471.7,246.6L469.6,243.6L467.5,240.1L465.5,236.2L463.5,231.9L461.5,227.1L459.5,221.9L457.6,216.3L455.7,210.3L453.8,204.0L451.9,197.3L450.1,190.3L448.3,183.0L446.4,175.5L444.6,167.8L442.9,159.8L441.1,151.6L439.3,143.3L437.6,134.8L435.8,126.1L434.1,117.4L432.3,108.5L430.6,99.5L428.9,90.4L427.2,81.2L425.5,72.0L423.8,62.6L422.1,53.2M147.0,115.8L154.0,120.9L161.1,125.9L168.1,130.9L175.2,135.7L182.2,140.5L189.3,145.2L196.4,149.7L203.4,154.2L210.5,158.5L217.6,162.7L224.7,166.7L231.8,170.5L239.0,174.2L246.1,177.6L253.3,180.8L260.4,183.8L267.6,186.4L274.8,188.8L282.0,190.8L289.3,192.5L296.6,193.8L303.9,194.6L311.2,195.1L318.5,195.1L325.9,194.7L333.3,193.8L340.7,192.5L348.2,190.8L355.7,188.6L363.2,186.0L370.7,183.0L378.3,179.7L385.9,176.1L393.4,172.1L401.1,167.9L408.7,163.4L416.3,158.7L424.0,153.7L431.6,148.6L439.3,143.3L447.0,137.8L454.7,132.2L462.4,126.5L470.1,120.6L477.8,114.6L485.5,108.6L493.3,102.4L501.0,96.2L508.7,89.9L516.5,83.5M532.2,232.8L529.8,234.7L527.4,236.6L525.0,238.4L522.6,240.1L520.2,241.7L517.9,243.3L515.5,244.7L513.2,245.9L510.8,247.1L508.5,248.1L506.2,248.9L503.8,249.6L501.5,250.0L499.3,250.3L497.0,250.3L494.7,250.0L492.5,249.5L490.3,248.7L488.1,247.5L485.9,246.0L483.7,244.2L481.6,241.9L479.5,239.3L477.4,236.2L475.3,232.8L473.3,228.9L471.3,224.6L469.3,219.9L467.3,214.8L465.4,209.3L463.5,203.4L461.6,197.2L459.7,190.7L457.8,183.9L456.0,176.8L454.2,169.4L452.4,161.8L450.6,154.0L448.8,146.0L447.0,137.8L445.2,129.5L443.5,121.0L441.7,112.3L440.0,103.6L438.3,94.7L436.5,85.8L434.8,76.7L433.1,67.6L431.4,58.3L429.7,49.0M145.1,108.6L152.2,113.6L159.2,118.5L166.3,123.3L173.4,128.1L180.4,132.7L187.5,137.2L194.6,141.7L201.7,146.0L208.8,150.2L215.9,154.2L223.0,158.0L230.1,161.7L237.2,165.2L244.4,168.5L251.5,171.5L258.7,174.3L265.9,176.8L273.1,179.0L280.4,180.9L287.6,182.4L294.9,183.6L302.2,184.4L309.5,184.8L316.9,184.7L324.3,184.3L331.7,183.4L339.1,182.2L346.6,180.5L354.0,178.4L361.5,175.9L369.1,173.1L376.6,169.9L384.2,166.4L391.8,162.7L399.4,158.6L407.0,154.3L414.6,149.7L422.2,144.9L429.9,139.9L437.6,134.8L445.2,129.5L452.9,124.0L460.6,118.4L468.3,112.7L476.0,106.8L483.7,100.9L491.5,94.9L499.2,88.8L506.9,82.6L514.6,76.3M539.8,228.5L537.4,230.3L535.0,232.1L532.6,233.7L530.3,235.3L527.9,236.8L525.5,238.2L523.2,239.5L520.8,240.6L518.5,241.6L516.2,242.5L513.9,243.1L511.6,243.6L509.3,243.9L507.0,244.0L504.7,243.9L502.5,243.5L500.2,242.8L498.0,241.8L495.8,240.6L493.7,238.9L491.5,237.0L489.4,234.7L487.3,232.0L485.2,228.9L483.1,225.4L481.1,221.5L479.1,217.3L477.1,212.6L475.1,207.6L473.2,202.2L471.2,196.4L469.3,190.4L467.4,184.0L465.6,177.3L463.7,170.4L461.9,163.2L460.1,155.7L458.3,148.1L456.5,140.2L454.7,132.2L452.9,124.0L451.2,115.7L449.4,107.2L447.7,98.5L445.9,89.8L444.2,81.0L442.5,72.0L440.7,63.0L439.0,53.9L437.3,44.7M143.3,101.3L150.4,106.1L157.4,110.9L164.5,115.6L171.6,120.2L178.6,124.8L185.7,129.2L192.8,133.5L199.9,137.6L207.0,141.7L214.1,145.5L221.2,149.2L228.4,152.8L235.5,156.1L242.7,159.2L249.9,162.1L257.0,164.7L264.2,167.1L271.5,169.1L278.7,170.9L286.0,172.3L293.3,173.4L300.6,174.1L307.9,174.4L315.3,174.4L322.6,173.9L330.0,173.1L337.5,171.8L344.9,170.2L352.4,168.2L359.9,165.8L367.4,163.1L374.9,160.1L382.5,156.7L390.1,153.1L397.7,149.2L405.3,145.0L412.9,140.6L420.5,136.0L428.2,131.1L435.8,126.1L443.5,121.0L451.2,115.7L458.8,110.2L466.5,104.6L474.2,98.9L481.9,93.1L489.6,87.2L497.4,81.2L505.1,75.1L512.8,68.9M547.4,224.0L545.0,225.7L542.6,227.4L540.3,228.9L537.9,230.4L535.6,231.8L533.2,233.0L530.9,234.1L528.5,235.2L526.2,236.0L523.9,236.7L521.6,237.3L519.3,237.6L517.0,237.8L514.7,237.7L512.5,237.4L510.2,236.9L508.0,236.0L505.8,235.0L503.6,233.6L501.4,231.8L499.3,229.8L497.2,227.4L495.1,224.6L493.0,221.5L490.9,218.0L488.9,214.2L486.9,209.9L484.9,205.3L482.9,200.4L480.9,195.1L479.0,189.5L477.1,183.5L475.2,177.2L473.3,170.7L471.5,163.9L469.6,156.8L467.8,149.5L466.0,142.0L464.2,134.3L462.4,126.5L460.6,118.4L458.8,110.2L457.1,101.8L455.3,93.4L453.6,84.7L451.8,76.0L450.1,67.2L448.4,58.3L446.6,49.3L444.9,40.2M141.5,93.7L148.6,98.5L155.6,103.2L162.7,107.8L169.8,112.3L176.8,116.7L183.9,120.9L191.0,125.1L198.1,129.1L205.3,133.0L212.4,136.8L219.5,140.3L226.6,143.7L233.8,146.9L241.0,149.9L248.2,152.6L255.4,155.1L262.6,157.3L269.8,159.2L277.1,160.9L284.3,162.2L291.6,163.2L298.9,163.8L306.3,164.1L313.6,164.0L321.0,163.5L328.4,162.7L335.8,161.5L343.3,159.9L350.7,158.0L358.2,155.7L365.7,153.1L373.3,150.2L380.8,147.0L388.4,143.4L396.0,139.7L403.6,135.6L411.2,131.4L418.8,126.9L426.4,122.2L434.1,117.4L441.7,112.3L449.4,107.2L457.1,101.8L464.8,96.4L472.5,90.8L480.2,85.1L487.9,79.3L495.6,73.4L503.3,67.5L511.0,61.4M555.0,219.3L552.7,221.0L550.3,222.5L547.9,224.0L545.6,225.3L543.2,226.6L540.9,227.7L538.5,228.7L536.2,229.6L533.9,230.3L531.6,230.9L529.3,231.3L527.0,231.5L524.7,231.5L522.5,231.3L520.2,230.8L518.0,230.2L515.8,229.2L513.6,228.0L511.4,226.5L509.2,224.7L507.1,222.6L505.0,220.1L502.9,217.3L500.8,214.2L498.7,210.7L496.7,206.8L494.7,202.6L492.7,198.1L490.7,193.2L488.7,188.0L486.8,182.4L484.9,176.6L483.0,170.4L481.1,164.0L479.2,157.3L477.4,150.4L475.5,143.3L473.7,135.9L471.9,128.3L470.1,120.6L468.3,112.7L466.5,104.6L464.8,96.4L463.0,88.0L461.2,79.5L459.5,70.9L457.8,62.2L456.0,53.4L454.3,44.5L452.6,35.6M139.7,86.1L146.8,90.7L153.8,95.3L160.9,99.8L168.0,104.2L175.1,108.4L182.2,112.6L189.3,116.6L196.4,120.5L203.5,124.3L210.6,127.9L217.8,131.3L224.9,134.5L232.1,137.6L239.3,140.4L246.5,143.0L253.7,145.4L260.9,147.5L268.1,149.3L275.4,150.8L282.7,152.0L290.0,152.9L297.3,153.5L304.6,153.7L312.0,153.6L319.4,153.1L326.8,152.3L334.2,151.1L341.6,149.6L349.1,147.8L356.6,145.6L364.1,143.0L371.6,140.2L379.1,137.1L386.7,133.7L394.3,130.1L401.9,126.2L409.5,122.1L417.1,117.7L424.7,113.2L432.3,108.5L440.0,103.6L447.7,98.5L455.3,93.4L463.0,88.0L470.7,82.6L478.4,77.0L486.1,71.3L493.8,65.5L501.5,59.7L509.2,53.7M562.7,214.6L560.3,216.1L558.0,217.5L555.6,218.9L553.2,220.1L550.9,221.2L548.6,222.2L546.2,223.1L543.9,223.9L541.6,224.5L539.3,224.9L537.0,225.2L534.7,225.2L532.5,225.1L530.2,224.8L528.0,224.2L525.7,223.4L523.5,222.4L521.3,221.1L519.2,219.5L517.0,217.6L514.9,215.4L512.8,212.8L510.6,210.0L508.6,206.8L506.5,203.3L504.5,199.5L502.5,195.3L500.5,190.8L498.5,186.0L496.5,180.8L494.6,175.4L492.7,169.6L490.7,163.6L488.9,157.3L487.0,150.7L485.1,143.9L483.3,136.9L481.4,129.7L479.6,122.2L477.8,114.6L476.0,106.8L474.2,98.9L472.5,90.8L470.7,82.6L468.9,74.2L467.2,65.7L465.4,57.1L463.7,48.4L461.9,39.7L460.2,30.8M137.9,78.3L145.0,82.8L152.0,87.3L159.1,91.6L166.2,95.9L173.3,100.1L180.4,104.1L187.5,108.0L194.7,111.8L201.8,115.4L208.9,118.9L216.1,122.2L223.2,125.3L230.4,128.2L237.6,130.9L244.8,133.4L252.0,135.6L259.2,137.6L266.5,139.3L273.7,140.7L281.0,141.8L288.3,142.7L295.6,143.2L303.0,143.4L310.3,143.2L317.7,142.7L325.1,141.9L332.5,140.8L340.0,139.3L347.4,137.5L354.9,135.4L362.4,133.0L369.9,130.2L377.5,127.2L385.0,124.0L392.6,120.4L400.2,116.7L407.8,112.7L415.4,108.5L423.0,104.1L430.6,99.5L438.3,94.7L445.9,89.8L453.6,84.7L461.2,79.5L468.9,74.2L476.6,68.8L484.3,63.2L492.0,57.5L499.7,51.8L507.4,45.9M570.3,209.6L568.0,211.1L565.6,212.4L563.3,213.6L560.9,214.8L558.6,215.8L556.3,216.7L553.9,217.4L551.6,218.0L549.3,218.5L547.0,218.8L544.7,219.0L542.5,218.9L540.2,218.7L538.0,218.2L535.7,217.5L533.5,216.6L531.3,215.5L529.1,214.1L527.0,212.4L524.8,210.4L522.7,208.1L520.5,205.6L518.4,202.7L516.4,199.5L514.3,196.0L512.3,192.1L510.3,188.0L508.2,183.5L506.3,178.7L504.3,173.6L502.4,168.3L500.4,162.6L498.5,156.7L496.6,150.5L494.7,144.0L492.9,137.4L491.0,130.5L489.2,123.4L487.4,116.1L485.5,108.6L483.7,100.9L481.9,93.1L480.2,85.1L478.4,77.0L476.6,68.8L474.8,60.4L473.1,51.9L471.3,43.3L469.6,34.7L467.9,25.9M136.1,70.3L143.2,74.8L150.3,79.1L157.4,83.4L164.5,87.5L171.6,91.6L178.7,95.5L185.8,99.3L192.9,103.0L200.1,106.5L207.2,109.8L214.4,113.0L221.5,115.9L228.7,118.7L235.9,121.3L243.1,123.7L250.3,125.8L257.6,127.6L264.8,129.3L272.1,130.6L279.4,131.6L286.7,132.4L294.0,132.9L301.3,133.0L308.7,132.8L316.1,132.4L323.5,131.6L330.9,130.4L338.3,129.0L345.8,127.2L353.3,125.2L360.8,122.8L368.3,120.2L375.8,117.3L383.3,114.1L390.9,110.7L398.5,107.1L406.1,103.2L413.7,99.1L421.3,94.9L428.9,90.4L436.5,85.8L444.2,81.0L451.8,76.0L459.5,70.9L467.2,65.7L474.8,60.4L482.5,54.9L490.2,49.4L497.9,43.7L505.6,38.0M578.0,204.6L575.6,205.9L573.3,207.2L570.9,208.3L568.6,209.3L566.3,210.2L564.0,211.0L561.6,211.6L559.3,212.1L557.0,212.5L554.8,212.7L552.5,212.7L550.2,212.5L548.0,212.2L545.7,211.6L543.5,210.8L541.3,209.8L539.1,208.5L536.9,207.0L534.7,205.3L532.6,203.2L530.5,200.9L528.3,198.3L526.2,195.3L524.2,192.1L522.1,188.6L520.1,184.8L518.0,180.6L516.0,176.2L514.1,171.5L512.1,166.5L510.1,161.2L508.2,155.6L506.3,149.7L504.4,143.6L502.5,137.3L500.6,130.7L498.8,124.0L496.9,117.0L495.1,109.8L493.3,102.4L491.5,94.9L489.6,87.2L487.9,79.3L486.1,71.3L484.3,63.2L482.5,54.9L480.8,46.6L479.0,38.1L477.3,29.5L475.5,20.9M134.3,62.3L141.4,66.6L148.5,70.9L155.6,75.0L162.7,79.1L169.8,83.0L176.9,86.8L184.1,90.5L191.2,94.0L198.3,97.4L205.5,100.6L212.7,103.7L219.8,106.5L227.0,109.2L234.2,111.7L241.4,113.9L248.7,115.9L255.9,117.7L263.2,119.2L270.4,120.5L277.7,121.4L285.0,122.1L292.4,122.5L299.7,122.7L307.1,122.5L314.4,122.0L321.8,121.2L329.3,120.1L336.7,118.7L344.1,117.0L351.6,115.0L359.1,112.7L366.6,110.1L374.1,107.3L381.7,104.3L389.2,101.0L396.8,97.4L404.4,93.7L412.0,89.7L419.6,85.6L427.2,81.2L434.8,76.7L442.5,72.0L450.1,67.2L457.8,62.2L465.4,57.1L473.1,51.9L480.8,46.6L488.4,41.1L496.1,35.6L503.8,29.9M585.7,199.5L583.3,200.7L581.0,201.8L578.6,202.8L576.3,203.8L574.0,204.5L571.7,205.2L569.4,205.7L567.1,206.1L564.8,206.4L562.5,206.4L560.2,206.3L558.0,206.1L555.7,205.6L553.5,204.9L551.3,204.0L549.1,202.9L546.9,201.6L544.7,200.0L542.5,198.1L540.4,196.0L538.3,193.6L536.1,191.0L534.0,188.0L532.0,184.8L529.9,181.2L527.9,177.4L525.8,173.3L523.8,168.9L521.9,164.2L519.9,159.3L517.9,154.0L516.0,148.5L514.1,142.8L512.2,136.8L510.3,130.5L508.4,124.1L506.5,117.4L504.7,110.5L502.8,103.4L501.0,96.2L499.2,88.8L497.4,81.2L495.6,73.4L493.8,65.5L492.0,57.5L490.2,49.4L488.4,41.1L486.7,32.8L484.9,24.3L483.2,15.7M132.5,54.1L139.6,58.4L146.7,62.5L153.8,66.6L161.0,70.5L168.1,74.3L175.2,78.0L182.3,81.6L189.5,85.0L196.6,88.2L203.8,91.3L210.9,94.3L218.1,97.0L225.3,99.6L232.5,101.9L239.8,104.1L247.0,106.0L254.2,107.7L261.5,109.1L268.8,110.3L276.1,111.2L283.4,111.9L290.7,112.2L298.1,112.3L305.4,112.1L312.8,111.6L320.2,110.8L327.6,109.7L335.0,108.3L342.5,106.7L350.0,104.7L357.5,102.5L365.0,100.1L372.5,97.3L380.0,94.4L387.6,91.2L395.1,87.7L402.7,84.1L410.3,80.2L417.9,76.2L425.5,72.0L433.1,67.6L440.7,63.0L448.4,58.3L456.0,53.4L463.7,48.4L471.3,43.3L479.0,38.1L486.7,32.8L494.4,27.3L502.1,21.8M593.3,194.2L591.0,195.4L588.6,196.4L586.3,197.3L584.0,198.1L581.7,198.8L579.4,199.3L577.1,199.8L574.8,200.0L572.5,200.2L570.2,200.1L568.0,199.9L565.7,199.5L563.5,199.0L561.2,198.2L559.0,197.2L556.8,196.0L554.6,194.6L552.5,192.9L550.3,191.0L548.2,188.8L546.0,186.4L543.9,183.7L541.8,180.7L539.8,177.4L537.7,173.9L535.7,170.1L533.6,166.0L531.6,161.6L529.6,157.0L527.7,152.0L525.7,146.9L523.8,141.4L521.8,135.8L519.9,129.9L518.0,123.7L516.2,117.3L514.3,110.8L512.4,104.0L510.6,97.0L508.7,89.9L506.9,82.6L505.1,75.1L503.3,67.5L501.5,59.7L499.7,51.8L497.9,43.7L496.1,35.6L494.4,27.3L492.6,18.9L490.8,10.5M130.8,45.8L137.9,50.0L145.0,54.0L152.1,58.0L159.2,61.8L166.3,65.5L173.5,69.1L180.6,72.6L187.7,75.9L194.9,79.0L202.1,82.0L209.3,84.8L216.4,87.5L223.6,89.9L230.9,92.2L238.1,94.2L245.3,96.1L252.6,97.7L259.8,99.0L267.1,100.1L274.4,101.0L281.7,101.6L289.1,101.9L296.4,101.9L303.8,101.7L311.2,101.2L318.6,100.4L326.0,99.3L333.4,98.0L340.9,96.4L348.3,94.5L355.8,92.4L363.3,90.0L370.8,87.3L378.3,84.4L385.9,81.3L393.4,78.0L401.0,74.4L408.6,70.7L416.2,66.7L423.8,62.6L431.4,58.3L439.0,53.9L446.6,49.3L454.3,44.5L461.9,39.7L469.6,34.7L477.3,29.5L484.9,24.3L492.6,18.9L500.3,13.5M601.0,188.9L598.7,189.9L596.3,190.8L594.0,191.7L591.7,192.4L589.4,192.9L587.1,193.4L584.8,193.7L582.5,193.9L580.2,193.9L578.0,193.8L575.7,193.5L573.5,193.0L571.2,192.3L569.0,191.4L566.8,190.4L564.6,189.1L562.4,187.5L560.3,185.8L558.1,183.8L556.0,181.6L553.8,179.1L551.7,176.3L549.6,173.3L547.6,170.1L545.5,166.5L543.5,162.7L541.4,158.6L539.4,154.3L537.4,149.7L535.5,144.8L533.5,139.7L531.6,134.3L529.6,128.7L527.7,122.9L525.8,116.8L523.9,110.6L522.0,104.1L520.2,97.4L518.3,90.6L516.5,83.5L514.6,76.3L512.8,68.9L511.0,61.4L509.2,53.7L507.4,45.9L505.6,38.0L503.8,29.9L502.1,21.8L500.3,13.5L498.5,5.1M129.0,37.5L136.1,41.5L143.2,45.5L150.3,49.3L157.5,53.0L164.6,56.6L171.7,60.1L178.9,63.5L186.0,66.7L193.2,69.7L200.4,72.6L207.6,75.3L214.8,77.9L222.0,80.2L229.2,82.4L236.4,84.3L243.7,86.1L250.9,87.6L258.2,88.9L265.5,89.9L272.8,90.7L280.1,91.3L287.4,91.5L294.8,91.6L302.1,91.3L309.5,90.8L316.9,90.0L324.3,89.0L331.8,87.7L339.2,86.1L346.7,84.3L354.2,82.2L361.6,79.8L369.2,77.3L376.7,74.4L384.2,71.4L391.8,68.2L399.3,64.7L406.9,61.1L414.5,57.2L422.1,53.2L429.7,49.0L437.3,44.7L444.9,40.2L452.6,35.6L460.2,30.8L467.9,25.9L475.5,20.9L483.2,15.7L490.8,10.5L498.5,5.1"/><path stroke="#ff0000" d="M42.5,574.5L42.5,665.5M34.5,658.5L126.5,658.5M42.5,574.5L35.5,595.5M42.5,574.5L49.5,595.5M126.5,658.5L105.5,651.5M126.5,658.5L105.5,665.5"/><circle cx="42.5" cy="658.5" r="2" stroke="#ff0000"/></svg>
<div class="t sans w" style="left:6.2px;top:15.5px;letter-spacing:0.36px">3D function plotter in JavaScript</div>
<div class="t sans w" style="left:6.2px;top:43.3px;">Zmin =</div>
<div class="t sans w" style="left:69.2px;top:43.3px;">0</div>
<div class="t sans w" style="left:6.2px;top:63.6px;">Zmax =</div>
<div class="t sans w" style="left:69.2px;top:63.6px;">28</div>
<div class="t sans w" style="left:293.4px;top:236.1px;">20</div>
<div class="t sans w" style="left:553.4px;top:319.2px;">20</div>
<div class="t sans w" style="left:128.4px;top:356.3px;">-20</div>
<div class="t sans w" style="left:412.3px;top:447.4px;">-20</div>
<div class="t sans w" style="left:7.1px;top:679.5px;">f(x,y) = sqrt(x*x+y*y)</div>
<div class="t sans w" style="left:55.5px;top:582.7px;">y</div>
<div class="t sans w" style="left:105.0px;top:632.0px;">x</div>
<div class="t sans w" style="left:46.9px;top:639.2px;">0</div>
</div>
<div class="t hd" style="left:708.0px;top:23.4px;">Translation by</div>
<div class="t hd" style="left:708.0px;top:196.0px;">Rotation about</div>
<div class="t hd" style="left:708.0px;top:367.3px;">Scale factor</div>
<div class="t lb" style="left:724.0px;top:69.6px;">X axis:</div>
<div class="inp" style="left:776px;top:65px;width:41px"><span>0.0</span></div>
<div class="a" style="left:822px;top:82px;width:29px;height:1px;background:linear-gradient(to right,#000 1px,transparent 1px);background-size:4px 1px"></div>
<div class="a" style="left:857px;top:63px;width:40px;height:24px;border:1px solid #000;background:#000"><div style="position:absolute;left:0;top:0;width:38px;height:22px;background:#8ac4fa;border-top:1px solid #c8e4ff;border-left:1px solid #c8e4ff;border-right:1px solid #000;border-bottom:1px solid #000"><div style="position:absolute;left:0;top:0;right:0;bottom:0;border-right:1px solid #0080ff;border-bottom:1px solid #0080ff"></div></div><div style="position:absolute;left:2px;top:2px;width:32px;height:16px;border:1px dotted #8b4513"></div><div style="position:absolute;left:0;top:0;width:38px;text-align:center;font:14px/20px 'Liberation Sans',sans-serif;letter-spacing:-0.2px;color:#000"><span style="filter:url(#thr);display:inline-block">O.K.</span></div></div>
<div class="t lb" style="left:724.0px;top:113.6px;">Y axis:</div>
<div class="inp" style="left:776px;top:109px;width:41px"><span>0.0</span></div>
<div class="a" style="left:822px;top:126px;width:29px;height:1px;background:linear-gradient(to right,#000 1px,transparent 1px);background-size:4px 1px"></div>
<div class="btn" style="left:857px;top:107px;width:40px;padding-right:0px"><span>O.K.</span></div>
<div class="t lb" style="left:724.0px;top:157.6px;">Z axis:</div>
<div class="inp" style="left:776px;top:153px;width:41px"><span>0.0</span></div>
<div class="a" style="left:822px;top:170px;width:29px;height:1px;background:linear-gradient(to right,#000 1px,transparent 1px);background-size:4px 1px"></div>
<div class="btn" style="left:857px;top:151px;width:40px;padding-right:0px"><span>O.K.</span></div>
<div class="t lb" style="left:724.0px;top:241.6px;">X axis:</div>
<div class="inp" style="left:776px;top:237px;width:41px"><span>-60</span></div>
<div class="a" style="left:822px;top:254px;width:29px;height:1px;background:linear-gradient(to right,#000 1px,transparent 1px);background-size:4px 1px"></div>
<div class="btn" style="left:857px;top:235px;width:40px;padding-right:0px"><span>O.K.</span></div>
<div class="t lb" style="left:724.0px;top:285.6px;">Y axis:</div>
<div class="inp" style="left:776px;top:281px;width:41px"><span>15</span></div>
<div class="a" style="left:822px;top:298px;width:29px;height:1px;background:linear-gradient(to right,#000 1px,transparent 1px);background-size:4px 1px"></div>
<div class="btn" style="left:857px;top:279px;width:40px;padding-right:0px"><span>O.K.</span></div>
<div class="t lb" style="left:724.0px;top:329.6px;">Z axis:</div>
<div class="inp" style="left:776px;top:325px;width:41px"><span>5</span></div>
<div class="a" style="left:822px;top:342px;width:29px;height:1px;background:linear-gradient(to right,#000 1px,transparent 1px);background-size:4px 1px"></div>
<div class="btn" style="left:857px;top:323px;width:40px;padding-right:0px"><span>O.K.</span></div>
<div class="t lb" style="left:732.0px;top:412.0px;letter-spacing:0.1px">Sx = Sy = Sz =</div>
<div class="inp" style="left:831px;top:408px;width:59px"><span>0.4</span></div>
<div class="btn" style="left:718px;top:450px;width:186px;padding-right:4px"><span>Sx = Sy = Sz</span></div>
<div class="t lb2" style="left:723.5px;top:499.6px;">Sx =</div>
<div class="inp" style="left:757px;top:495px;width:41px"><span>1</span></div>
<div class="a" style="left:803px;top:512px;width:49px;height:1px;background:linear-gradient(to right,#000 1px,transparent 1px);background-size:4px 1px"></div>
<div class="btn" style="left:857px;top:493px;width:40px;padding-right:0px"><span>O.K.</span></div>
<div class="t lb2" style="left:723.5px;top:543.6px;">Sy =</div>
<div class="inp" style="left:757px;top:539px;width:41px"><span>1</span></div>
<div class="a" style="left:803px;top:556px;width:49px;height:1px;background:linear-gradient(to right,#000 1px,transparent 1px);background-size:4px 1px"></div>
<div class="btn" style="left:857px;top:537px;width:40px;padding-right:0px"><span>O.K.</span></div>
<div class="t lb2" style="left:723.5px;top:587.6px;">Sz =</div>
<div class="inp" style="left:757px;top:583px;width:41px"><span>1</span></div>
<div class="a" style="left:803px;top:600px;width:49px;height:1px;background:linear-gradient(to right,#000 1px,transparent 1px);background-size:4px 1px"></div>
<div class="btn" style="left:857px;top:581px;width:40px;padding-right:0px"><span>O.K.</span></div>
<div class="btn" style="left:720px;top:625px;width:43px;padding-right:0px"><span>Draw</span></div>
<div class="btn" style="left:779px;top:625px;width:55px;padding-right:0px"><span>Points</span></div>
<div class="btn" style="left:850px;top:625px;width:51px;padding-right:0px"><span>Reset</span></div>
<div class="a" style="left:768px;top:644px;width:5px;height:1px;background:linear-gradient(to right,#000 1px,transparent 1px);background-size:4px 1px"></div>
<div class="a" style="left:839px;top:644px;width:5px;height:1px;background:linear-gradient(to right,#000 1px,transparent 1px);background-size:4px 1px"></div>
<div class="btn" style="left:719px;top:668px;width:183px;padding-right:9px"><span>Help</span></div>
</body></html>
